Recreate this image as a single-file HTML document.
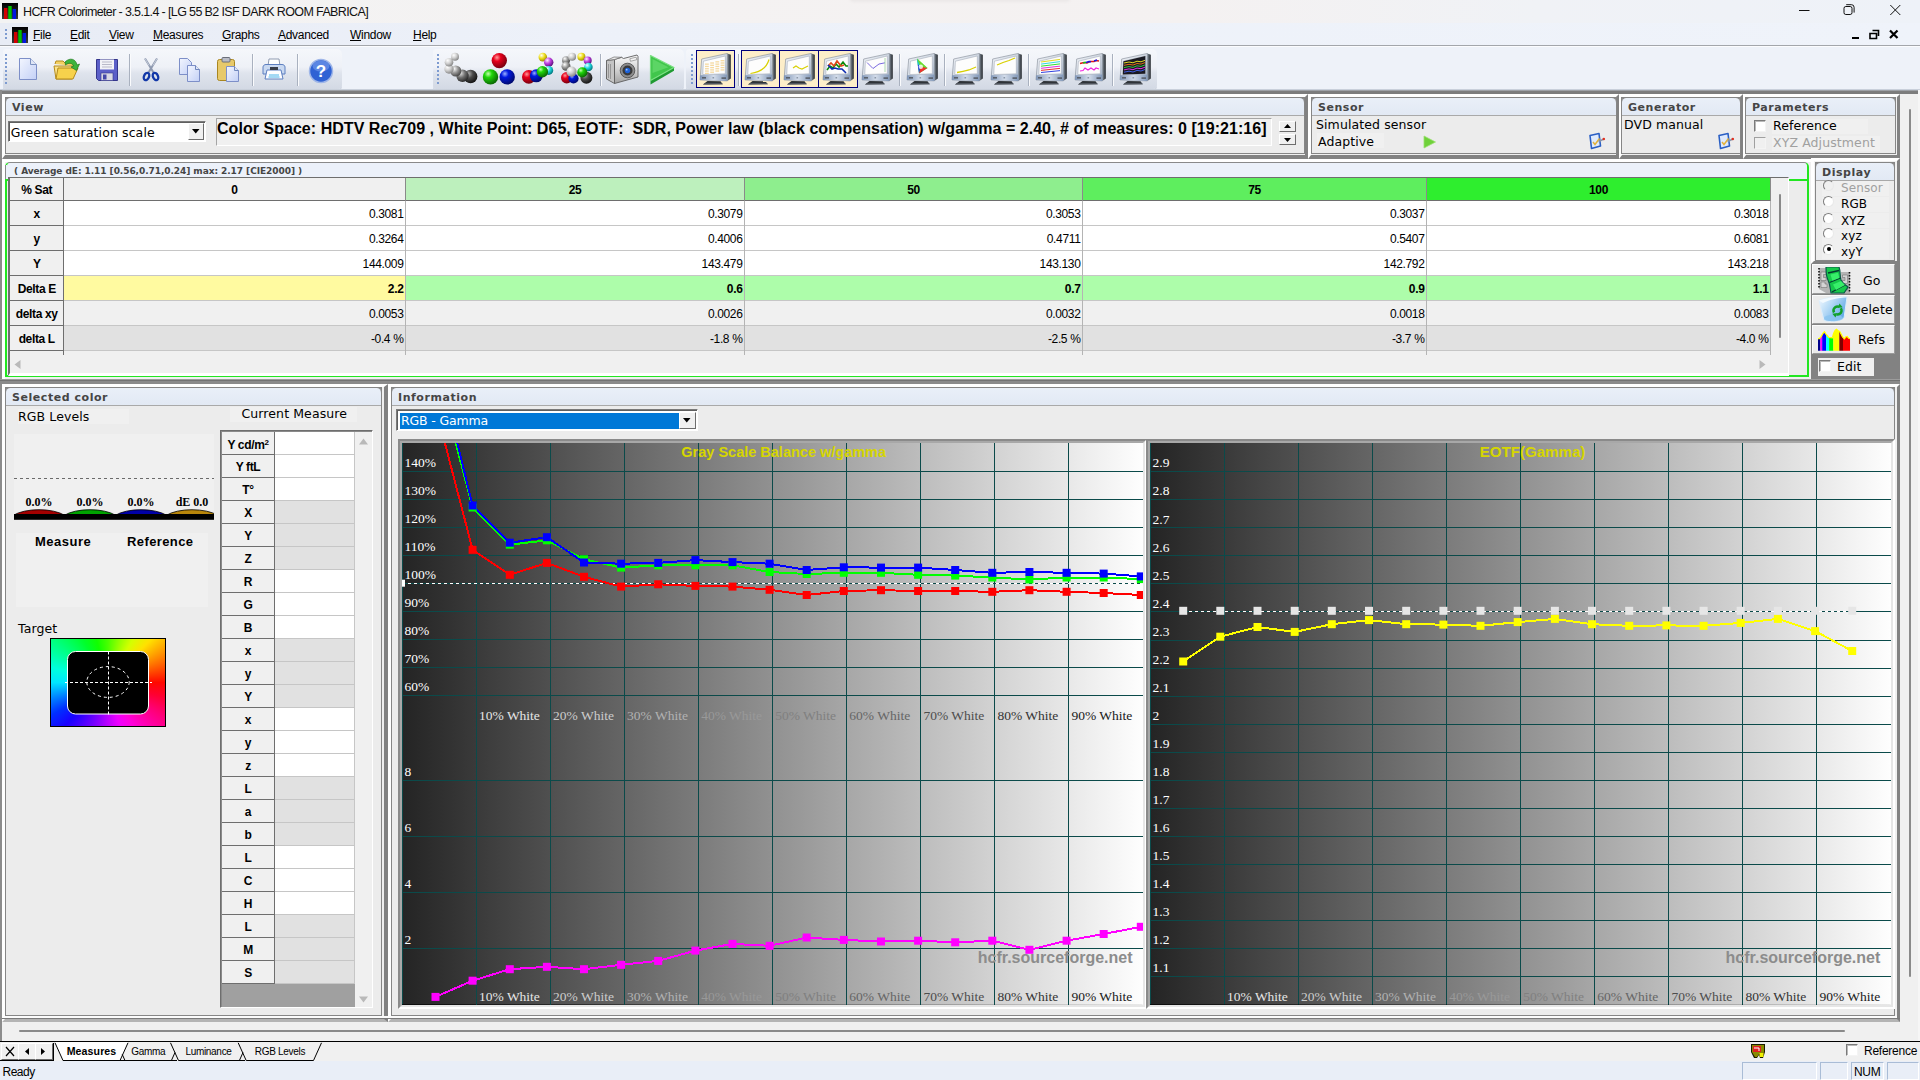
<!DOCTYPE html>
<html lang="en"><head><meta charset="utf-8"><title>HCFR Colorimeter - 3.5.1.4 - [LG 55 B2 ISF DARK ROOM FABRICA]</title>
<style>
*{box-sizing:border-box;margin:0;padding:0}
html,body{width:1920px;height:1080px;overflow:hidden;background:#f0f0f0}
body{position:relative;font-family:"Liberation Sans",sans-serif;font-size:12px;color:#000}
.a{position:absolute}
.t{position:absolute;white-space:pre;line-height:1}
.ui{font-family:"Liberation Sans",sans-serif;font-size:12px;letter-spacing:-0.35px}
.vd{font-family:"DejaVu Sans","Liberation Sans",sans-serif;font-size:12.5px;letter-spacing:0.1px}
.vb{font-family:"DejaVu Sans","Liberation Sans",sans-serif;font-weight:bold;font-size:11px;letter-spacing:.55px;color:#454545}
.sf{font-family:"Liberation Serif",serif}
/* dock wrappers: raised edge */
.wrap{position:absolute;border-style:solid;border-width:3px;border-color:#fff #828282 #828282 #fff;background:#f0f0f0}
.pnl{position:absolute;background:#ececec;border:1px solid #868686;overflow:hidden}
.pnl::before{content:"";position:absolute;left:0;top:0;right:0;height:5px;background:#8c8c8c}
.pnl .hd{position:absolute;left:0;top:0;right:0;height:18px;border-radius:4.5px 4.5px 0 0;background:linear-gradient(#e9eff8,#e2e9f4);border-bottom:1px solid #a9a9a9}
.pnl .hd span{position:absolute;left:6px;top:3px;white-space:pre;line-height:14px}
.cb{position:absolute;width:12px;height:12px;background:#fff;border:1px solid;border-color:#7a7a7a #f4f4f4 #f4f4f4 #7a7a7a;box-shadow:inset 1px 1px 0 #b9b9b9}
.rd{position:absolute;width:11px;height:11px;border-radius:50%;background:#fff;border:1px solid;border-color:#7c7c7c #e9e9e9 #e9e9e9 #7c7c7c}
.btn{position:absolute;background:#ececec;border:1px solid;border-color:#fbfbfb #9a9a9a #9a9a9a #fbfbfb}
</style></head><body>

<svg width="0" height="0" style="position:absolute"><defs>
<linearGradient id="gBez" x1="0" y1="0" x2="1" y2="1"><stop offset="0" stop-color="#f4f6fa"/><stop offset=".6" stop-color="#c9d2de"/><stop offset="1" stop-color="#9fb0c8"/></linearGradient>
<linearGradient id="gSide" x1="0" y1="0" x2="1" y2="0"><stop offset="0" stop-color="#7d8792"/><stop offset="1" stop-color="#23272c"/></linearGradient>
<linearGradient id="gLow" x1="0" y1="0" x2="1" y2="0"><stop offset="0" stop-color="#7f95b6"/><stop offset=".5" stop-color="#d3dcea"/><stop offset="1" stop-color="#8298b8"/></linearGradient>
<linearGradient id="gPage" x1="0" y1="0" x2="1" y2="1"><stop offset="0" stop-color="#f3f6ff"/><stop offset="1" stop-color="#c3d0f6"/></linearGradient>
<linearGradient id="gIco" x1="0" y1="0" x2="0" y2="1"><stop offset="0" stop-color="#000"/><stop offset="1" stop-color="#3a3a3a"/></linearGradient>
<radialGradient id="bR" cx=".35" cy=".3" r=".7"><stop offset="0" stop-color="#ff9a9a"/><stop offset=".35" stop-color="#e8001c"/><stop offset="1" stop-color="#7a0010"/></radialGradient>
<radialGradient id="bG" cx=".35" cy=".3" r=".7"><stop offset="0" stop-color="#c6ffb0"/><stop offset=".35" stop-color="#1fd60a"/><stop offset="1" stop-color="#0a6a04"/></radialGradient>
<radialGradient id="bB" cx=".35" cy=".3" r=".7"><stop offset="0" stop-color="#9ab0ff"/><stop offset=".35" stop-color="#0018e0"/><stop offset="1" stop-color="#000a70"/></radialGradient>
<radialGradient id="bW" cx=".35" cy=".3" r=".7"><stop offset="0" stop-color="#ffffff"/><stop offset=".5" stop-color="#d0d0d0"/><stop offset="1" stop-color="#8a8a8a"/></radialGradient>
<radialGradient id="bK" cx=".35" cy=".3" r=".7"><stop offset="0" stop-color="#b0b0b0"/><stop offset=".45" stop-color="#4a4a4a"/><stop offset="1" stop-color="#161616"/></radialGradient>
<radialGradient id="bD" cx=".35" cy=".3" r=".7"><stop offset="0" stop-color="#e0e0e0"/><stop offset=".5" stop-color="#707070"/><stop offset="1" stop-color="#2c2c2c"/></radialGradient>
<radialGradient id="bM" cx=".35" cy=".3" r=".7"><stop offset="0" stop-color="#ffffff"/><stop offset=".5" stop-color="#9a9a9a"/><stop offset="1" stop-color="#4a4a4a"/></radialGradient>
<radialGradient id="bY" cx=".35" cy=".3" r=".7"><stop offset="0" stop-color="#fffff0"/><stop offset=".5" stop-color="#f0e020"/><stop offset="1" stop-color="#a09000"/></radialGradient>
<radialGradient id="bC" cx=".35" cy=".3" r=".7"><stop offset="0" stop-color="#f0ffff"/><stop offset=".5" stop-color="#20d8e0"/><stop offset="1" stop-color="#007a80"/></radialGradient>
<radialGradient id="bP" cx=".35" cy=".3" r=".7"><stop offset="0" stop-color="#fff0ff"/><stop offset=".5" stop-color="#c040e0"/><stop offset="1" stop-color="#601080"/></radialGradient>
</defs></svg>
<div class="a" style="left:0;top:0;width:1920px;height:23px;background:linear-gradient(90deg,#f3f3f3 0,#f4f2f2 35%,#f4f1f1 62%,#f0f2f6 80%,#eef2f8 100%)"></div>
<svg class="a" style="left:2px;top:3px" width="16" height="16" viewBox="0 0 16 16"><rect width="16" height="16" fill="url(#gIco)"/><rect x="2" y="5" width="3.4" height="11" fill="#d40000"/><rect x="6.3" y="3" width="3.4" height="13" fill="#00c000"/><rect x="10.6" y="6" width="3.4" height="10" fill="#0018e0"/></svg>
<div class="t" style="left:23px;top:6px;font-size:12.5px;letter-spacing:-0.63px;color:#111">HCFR Colorimeter - 3.5.1.4 - [LG 55 B2 ISF DARK ROOM FABRICA]</div>
<svg class="a" style="left:1790px;top:0" width="130" height="23" viewBox="0 0 130 23" fill="none" stroke="#111" stroke-width="1"><path d="M9 10.5h10.5"/><rect x="54" y="6.5" width="8" height="8" rx="1.8"/><path d="M56.2 4.7h5.3a2.6 2.6 0 0 1 2.6 2.6v5.3"/><path d="M100.3 5l10 10M110.3 5l-10 10"/></svg>
<div class="a" style="left:0;top:23px;width:1920px;height:22px;background:linear-gradient(90deg,#e8ecf5 0,#edf1f9 30%,#eff3fa 100%)"></div>
<div class="a" style="left:850px;top:-7px;width:220px;height:8px;border-radius:5px;background:#ece9e9;box-shadow:0 0 3px 1px #ebe8e8"></div>
<div class="a" style="left:0;top:45px;width:1920px;height:1px;background:#a3a6ab"></div>
<div class="a" style="left:0;top:46px;width:1920px;height:1px;background:#fbfcfe"></div>
<div class="a" style="left:5px;top:29px;width:2px;height:11px;background:repeating-linear-gradient(#7d9bd0 0 2px,transparent 2px 4px)"></div>
<svg class="a" style="left:12px;top:27px" width="16" height="16" viewBox="0 0 16 16"><rect width="16" height="16" fill="url(#gIco)"/><rect x="2" y="5" width="3.4" height="11" fill="#d40000"/><rect x="6.3" y="3" width="3.4" height="13" fill="#00c000"/><rect x="10.6" y="6" width="3.4" height="10" fill="#0018e0"/></svg>
<div class="t" style="left:33px;top:28.5px;font-size:12px;letter-spacing:-0.3px"><u>F</u>ile</div>
<div class="t" style="left:70px;top:28.5px;font-size:12px;letter-spacing:-0.3px"><u>E</u>dit</div>
<div class="t" style="left:109px;top:28.5px;font-size:12px;letter-spacing:-0.3px"><u>V</u>iew</div>
<div class="t" style="left:153px;top:28.5px;font-size:12px;letter-spacing:-0.3px"><u>M</u>easures</div>
<div class="t" style="left:222px;top:28.5px;font-size:12px;letter-spacing:-0.3px"><u>G</u>raphs</div>
<div class="t" style="left:278px;top:28.5px;font-size:12px;letter-spacing:-0.3px"><u>A</u>dvanced</div>
<div class="t" style="left:350px;top:28.5px;font-size:12px;letter-spacing:-0.3px"><u>W</u>indow</div>
<div class="t" style="left:413px;top:28.5px;font-size:12px;letter-spacing:-0.3px"><u>H</u>elp</div>
<svg class="a" style="left:1848px;top:26px" width="56" height="16" viewBox="0 0 56 16"><rect x="4" y="11" width="7" height="2" fill="#000"/><path d="M24.5 4.5h6v5.5M22 7.5h6.5v5h-6.5z" fill="none" stroke="#000" stroke-width="1.6"/><path d="M42 4.5l7.5 7.5M49.5 4.5l-7.5 7.5" stroke="#000" stroke-width="2.2"/></svg>
<div class="a" style="left:0;top:47px;width:1920px;height:43px;background:#eef2f9"></div>
<div class="a" style="left:3px;top:49px;width:339px;height:40px;background:linear-gradient(#f5f7fb 0,#eef1f7 45%,#dfe4ed 60%,#d3d9e4 100%);border-radius:3px 5px 4px 3px;box-shadow:0 1px 0 #c3cad6"></div>
<div class="a" style="left:433px;top:49px;width:251px;height:40px;background:linear-gradient(#f5f7fb 0,#eef1f7 45%,#dfe4ed 60%,#d3d9e4 100%);border-radius:3px 5px 4px 3px;box-shadow:0 1px 0 #c3cad6"></div>
<div class="a" style="left:686px;top:49px;width:471px;height:40px;background:linear-gradient(#f5f7fb 0,#eef1f7 45%,#dfe4ed 60%,#d3d9e4 100%);border-radius:3px 5px 4px 3px;box-shadow:0 1px 0 #c3cad6"></div>
<div class="a" style="left:5px;top:54px;width:2px;height:30px;background:repeating-linear-gradient(#7d9bd0 0 2px,transparent 2px 4px)"></div>
<div class="a" style="left:437px;top:54px;width:2px;height:30px;background:repeating-linear-gradient(#7d9bd0 0 2px,transparent 2px 4px)"></div>
<div class="a" style="left:691px;top:54px;width:2px;height:30px;background:repeating-linear-gradient(#7d9bd0 0 2px,transparent 2px 4px)"></div>
<div class="a" style="left:129px;top:54px;width:1px;height:32px;background:#a9b1bf;box-shadow:1px 0 0 #fafbfd"></div>
<div class="a" style="left:252px;top:54px;width:1px;height:32px;background:#a9b1bf;box-shadow:1px 0 0 #fafbfd"></div>
<div class="a" style="left:297px;top:54px;width:1px;height:32px;background:#a9b1bf;box-shadow:1px 0 0 #fafbfd"></div>
<div class="a" style="left:600px;top:54px;width:1px;height:32px;background:#a9b1bf;box-shadow:1px 0 0 #fafbfd"></div>
<div class="a" style="left:738px;top:54px;width:1px;height:32px;background:#a9b1bf;box-shadow:1px 0 0 #fafbfd"></div>
<div class="a" style="left:899px;top:54px;width:1px;height:32px;background:#a9b1bf;box-shadow:1px 0 0 #fafbfd"></div>
<div class="a" style="left:944px;top:54px;width:1px;height:32px;background:#a9b1bf;box-shadow:1px 0 0 #fafbfd"></div>
<div class="a" style="left:1028px;top:54px;width:1px;height:32px;background:#a9b1bf;box-shadow:1px 0 0 #fafbfd"></div>
<div class="a" style="left:1112px;top:54px;width:1px;height:32px;background:#a9b1bf;box-shadow:1px 0 0 #fafbfd"></div>
<svg class="a" style="left:18px;top:57px" width="20" height="24" viewBox="0 0 20 24"><path d="M1.5 1.5h11l6 6v15h-17z" fill="url(#gPage)" stroke="#7d8fc8"/><path d="M12.5 1.5v6h6" fill="#dfe6f5" stroke="#7d93c2"/></svg>
<svg class="a" style="left:53px;top:56px" width="28" height="26" viewBox="0 0 28 26"><path d="M2 8l1-3h7l2 2h9v3" fill="#f3d063" stroke="#b48a1c"/><path d="M1 10h20l-2 13H3z" fill="#fbe38b" stroke="#b48a1c"/><path d="M5 12h20l-5 11H3z" fill="#f7d24c" stroke="#b48a1c"/><path d="M12 6c5-5 11-3 12 3l2.5-1-3 6.5-5.5-3.5 2.6-.9c-1-3-5-4-8-1z" fill="#3cb43c" stroke="#1c7a1c" stroke-width=".7"/></svg>
<svg class="a" style="left:95px;top:58px" width="24" height="24" viewBox="0 0 24 24"><path d="M1.5 1.5h21v21h-19l-2-2z" fill="#5b5fc8" stroke="#34368c"/><rect x="5" y="1.5" width="14" height="10" fill="#f2f2f7"/><path d="M7 4h10M7 6.5h10M7 9h10" stroke="#b9b9c8"/><rect x="6" y="15" width="12" height="7.5" fill="#d8d8e4" stroke="#34368c" stroke-width=".6"/><rect x="8" y="16.5" width="3.5" height="5" fill="#4448a8"/></svg>
<svg class="a" style="left:140px;top:57px" width="22" height="26" viewBox="0 0 22 26" fill="none"><path d="M5 1.500l8.500 14M17 1.500L8.500 15.500" stroke="#8e99b0" stroke-width="2"/><path d="M5 1.500l4 7M17 1.500l-4 7" stroke="#c5ccd9" stroke-width="1"/><ellipse cx="6.500" cy="19.500" rx="2.500" ry="3.800" transform="rotate(25 6.500 19.500)" stroke="#1238a8" stroke-width="2.300"/><ellipse cx="15.500" cy="19.500" rx="2.500" ry="3.800" transform="rotate(-25 15.500 19.500)" stroke="#1238a8" stroke-width="2.300"/></svg>
<svg class="a" style="left:178px;top:57px" width="24" height="26" viewBox="0 0 24 26"><path d="M1.5 1.5h8l4 4v12h-12z" fill="url(#gPage)" stroke="#7d8fc8"/><path d="M9.500 8.500h8l4 4v12h-12z" fill="url(#gPage)" stroke="#7d8fc8"/><path d="M17.5 8.500v4h4" fill="#dfe6f5" stroke="#6f86bc"/></svg>
<svg class="a" style="left:216px;top:56px" width="24" height="27" viewBox="0 0 24 27"><rect x="1.500" y="3.500" width="17" height="21" rx="2" fill="#e7c96a" stroke="#a98620"/><rect x="6" y="1.5" width="8" height="4.5" rx="1" fill="#b9bcc6" stroke="#6a6e7a"/><path d="M10.5 10.500h8l4 4v11h-12z" fill="url(#gPage)" stroke="#7d8fc8"/><path d="M18.5 10.500v4h4" fill="#dfe6f5" stroke="#6f86bc"/></svg>
<svg class="a" style="left:261px;top:58px" width="26" height="24" viewBox="0 0 26 24"><path d="M8 1h10l1 7H7z" fill="#fff" stroke="#8f9bb0"/><path d="M2 9c0-1.500 1.500-2.500 3-2.500h16c1.500 0 3 1 3 2.500v7H2z" fill="#c9d9f1" stroke="#5d7fc0"/><path d="M6 12h14l2 9H4z" fill="#fdfdff" stroke="#5d7fc0"/><rect x="9" y="9" width="8" height="3" fill="#3a3f4a"/><path d="M8 17l10 0M7.500 19h11" stroke="#4ab4e8"/></svg>
<svg class="a" style="left:308px;top:58px" width="26" height="26" viewBox="0 0 26 26"><circle cx="13" cy="13" r="11.500" fill="#2f62d4" stroke="#9fb6e8" stroke-width="1.500"/><ellipse cx="13" cy="8" rx="8.500" ry="5.500" fill="#7fa4ee" opacity=".55"/><text x="13" y="19" font-family="Liberation Sans" font-weight="bold" font-size="17" text-anchor="middle" fill="#fff">?</text></svg>
<svg class="a" style="left:432px;top:46px" width="170" height="44" viewBox="432 46 170 44"><circle cx="470.6" cy="76.5" r="6.8" fill="url(#bK)"/><circle cx="462.5" cy="75.8" r="6.2" fill="url(#bD)"/><circle cx="455.7" cy="71" r="5.6" fill="url(#bM)"/><circle cx="449" cy="69" r="4.7" fill="url(#bW)"/><circle cx="449" cy="62.2" r="4.3" fill="url(#bW)"/><circle cx="455" cy="56.8" r="4" fill="url(#bW)"/><circle cx="499.3" cy="60.6" r="7.7" fill="url(#bR)"/><circle cx="490.5" cy="76.9" r="7.7" fill="url(#bG)"/><circle cx="507.2" cy="76.9" r="7.7" fill="url(#bB)"/><circle cx="542.8" cy="57.1" r="4.3" fill="url(#bY)"/><circle cx="548.7" cy="62.2" r="4.7" fill="url(#bP)"/><circle cx="548.7" cy="70.4" r="4.5" fill="url(#bC)"/><circle cx="528.8" cy="76.9" r="6.8" fill="url(#bR)"/><circle cx="536.3" cy="75.8" r="6.5" fill="url(#bB)"/><circle cx="542.4" cy="71.7" r="5.7" fill="url(#bG)"/><circle cx="566" cy="60.2" r="4" fill="url(#bM)"/><circle cx="572.1" cy="56.8" r="4" fill="url(#bW)"/><circle cx="581.4" cy="56.8" r="4" fill="url(#bY)"/><circle cx="587.7" cy="60.6" r="4" fill="url(#bP)"/><circle cx="588.4" cy="67" r="4.3" fill="url(#bC)"/><circle cx="586.4" cy="77.8" r="6" fill="url(#bK)"/><circle cx="566.7" cy="77.8" r="5.7" fill="url(#bR)"/><circle cx="573.5" cy="78.5" r="5.1" fill="url(#bB)"/><circle cx="582.3" cy="72.4" r="5.1" fill="url(#bG)"/><circle cx="566" cy="66.3" r="4.5" fill="url(#bM)"/><circle cx="571.5" cy="71.7" r="5.1" fill="url(#bW)"/></svg>
<svg class="a" style="left:605px;top:53px" width="36" height="33" viewBox="0 0 36 33"><defs><linearGradient id="gCam" x1="0" y1="0" x2="0" y2="1"><stop offset="0" stop-color="#fafafa"/><stop offset=".5" stop-color="#d4d4d4"/><stop offset="1" stop-color="#a2a2a2"/></linearGradient></defs><path d="M9.500 6.500l7-2.200 2 1.200 13.500-3.500 1 1.500v20.500l-23.500 6.500z" fill="url(#gCam)" stroke="#5e5e5e" stroke-width=".9"/><path d="M1.500 7.500l8 -1v24l-8-4.500z" fill="#c4c4c4" stroke="#5e5e5e" stroke-width=".9"/><path d="M3.500 11v14M5.500 11v15" stroke="#8a8a8a" stroke-width=".8"/><path d="M1.500 7.500l7.500-3.500 7.500.3-7 2.200z" fill="#ececec" stroke="#6a6a6a" stroke-width=".7"/><rect x="25" y="5" width="6.500" height="2.600" fill="#f4f4f4" stroke="#6a6a6a" stroke-width=".5" transform="rotate(-14 28 6)"/><circle cx="22.500" cy="17.500" r="7.300" fill="#8d8d8d" stroke="#444" stroke-width=".8"/><circle cx="22.500" cy="17.500" r="5" fill="#3a3a3a"/><circle cx="22.500" cy="17.500" r="2.700" fill="#1d62d8"/><circle cx="21.700" cy="16.700" r=".9" fill="#9cc4ff"/></svg>
<svg class="a" style="left:649px;top:54px" width="27" height="32" viewBox="0 0 27 32"><path d="M1.500 26l23.500-12.500v3.200L1.500 30.500z" fill="#1f9a32"/><path d="M1.500 1.500l23.500 12L1.500 26.500z" fill="#41c64c" stroke="#7be082" stroke-width="1.200" stroke-linejoin="round"/><path d="M3.500 5l16 8.300L3.500 19z" fill="#66d96e" opacity=".75"/></svg>
<div class="a" style="left:696px;top:50px;width:39px;height:38px;background:#fdeec9;border:1px solid #00007c"></div>
<div class="a" style="left:741px;top:50px;width:39px;height:38px;background:#fdeec9;border:1px solid #00007c"></div>
<div class="a" style="left:779px;top:50px;width:40px;height:38px;background:#fdeec9;border:1px solid #00007c"></div>
<div class="a" style="left:818px;top:50px;width:40px;height:38px;background:#fdeec9;border:1px solid #00007c"></div>
<svg class="a" style="left:699px;top:53px" width="33" height="33" viewBox="0 0 33 33"><polygon points="2.7,6 28.4,0.4 28.4,27.9 1,26.9" fill="url(#gBez)" stroke="#7f8894" stroke-width=".6"/><polygon points="28.4,0.4 31.8,1.8 31.8,25.4 28.4,27.9" fill="url(#gSide)"/><polygon points="1,22.2 28.4,21.6 28.4,27.9 1,26.9" fill="url(#gLow)"/><polygon points="4.4,8.2 26.3,3 26.3,20.8 3.8,21.5" fill="#fdfdfd" stroke="#9aa3b0" stroke-width=".5"/><rect x="3" y="24" width="4" height="1.6" fill="#59606b"/><rect x="22.5" y="24.3" width="4.5" height="1.6" fill="#59606b"/><rect x="13.5" y="24.2" width="1.6" height="1.2" fill="#7b8798"/><polygon points="8.5,28 21.5,28.3 23.8,31.2 4,31.4" fill="#2f3338"/><polygon points="6,30.3 23,30.2 23.8,31.2 4,31.4" fill="#5b6068"/><rect x="6.0" y="10.5" width="3.800" height="1.300" fill="#f5d9a0"/><rect x="11.2" y="9.35" width="3.800" height="1.300" fill="#f5d9a0"/><rect x="16.4" y="8.2" width="3.800" height="1.300" fill="#f5d9a0"/><rect x="21.6" y="7.050000000000001" width="3.800" height="1.300" fill="#f5d9a0"/><rect x="6.0" y="12.8" width="3.800" height="1.300" fill="#f5d9a0"/><rect x="11.2" y="11.65" width="3.800" height="1.300" fill="#f5d9a0"/><rect x="16.4" y="10.5" width="3.800" height="1.300" fill="#f5d9a0"/><rect x="21.6" y="9.350000000000001" width="3.800" height="1.300" fill="#f5d9a0"/><rect x="6.0" y="15.1" width="3.800" height="1.300" fill="#f5d9a0"/><rect x="11.2" y="13.95" width="3.800" height="1.300" fill="#f5d9a0"/><rect x="16.4" y="12.8" width="3.800" height="1.300" fill="#f5d9a0"/><rect x="21.6" y="11.65" width="3.800" height="1.300" fill="#f5d9a0"/><rect x="6.0" y="17.4" width="3.800" height="1.300" fill="#f5d9a0"/><rect x="11.2" y="16.25" width="3.800" height="1.300" fill="#f5d9a0"/><rect x="16.4" y="15.099999999999998" width="3.800" height="1.300" fill="#f5d9a0"/><rect x="21.6" y="13.95" width="3.800" height="1.300" fill="#f5d9a0"/><rect x="6.0" y="19.7" width="3.800" height="1.300" fill="#f5d9a0"/><rect x="11.2" y="18.55" width="3.800" height="1.300" fill="#f5d9a0"/><rect x="16.4" y="17.4" width="3.800" height="1.300" fill="#f5d9a0"/><rect x="21.6" y="16.25" width="3.800" height="1.300" fill="#f5d9a0"/></svg>
<svg class="a" style="left:744px;top:53px" width="33" height="33" viewBox="0 0 33 33"><polygon points="2.7,6 28.4,0.4 28.4,27.9 1,26.9" fill="url(#gBez)" stroke="#7f8894" stroke-width=".6"/><polygon points="28.4,0.4 31.8,1.8 31.8,25.4 28.4,27.9" fill="url(#gSide)"/><polygon points="1,22.2 28.4,21.6 28.4,27.9 1,26.9" fill="url(#gLow)"/><polygon points="4.4,8.2 26.3,3 26.3,20.8 3.8,21.5" fill="#fdfdfd" stroke="#9aa3b0" stroke-width=".5"/><rect x="3" y="24" width="4" height="1.6" fill="#59606b"/><rect x="22.5" y="24.3" width="4.5" height="1.6" fill="#59606b"/><rect x="13.5" y="24.2" width="1.6" height="1.2" fill="#7b8798"/><polygon points="8.5,28 21.5,28.3 23.8,31.2 4,31.4" fill="#2f3338"/><polygon points="6,30.3 23,30.2 23.8,31.2 4,31.4" fill="#5b6068"/><path d="M6.500 20.500c8-1 16-5 18.500-14" fill="none" stroke="#d8d000" stroke-width="1.200"/></svg>
<svg class="a" style="left:783px;top:53px" width="33" height="33" viewBox="0 0 33 33"><polygon points="2.7,6 28.4,0.4 28.4,27.9 1,26.9" fill="url(#gBez)" stroke="#7f8894" stroke-width=".6"/><polygon points="28.4,0.4 31.8,1.8 31.8,25.4 28.4,27.9" fill="url(#gSide)"/><polygon points="1,22.2 28.4,21.6 28.4,27.9 1,26.9" fill="url(#gLow)"/><polygon points="4.4,8.2 26.3,3 26.3,20.8 3.8,21.5" fill="#fdfdfd" stroke="#9aa3b0" stroke-width=".5"/><rect x="3" y="24" width="4" height="1.6" fill="#59606b"/><rect x="22.5" y="24.3" width="4.5" height="1.6" fill="#59606b"/><rect x="13.5" y="24.2" width="1.6" height="1.2" fill="#7b8798"/><polygon points="8.5,28 21.5,28.3 23.8,31.2 4,31.4" fill="#2f3338"/><polygon points="6,30.3 23,30.2 23.8,31.2 4,31.4" fill="#5b6068"/><path d="M10 15l3-2 3 2 3 1 3-1.500 3-1.500" fill="none" stroke="#d8d000" stroke-width="1.200"/></svg>
<svg class="a" style="left:822px;top:53px" width="33" height="33" viewBox="0 0 33 33"><polygon points="2.7,6 28.4,0.4 28.4,27.9 1,26.9" fill="url(#gBez)" stroke="#7f8894" stroke-width=".6"/><polygon points="28.4,0.4 31.8,1.8 31.8,25.4 28.4,27.9" fill="url(#gSide)"/><polygon points="1,22.2 28.4,21.6 28.4,27.9 1,26.9" fill="url(#gLow)"/><polygon points="4.4,8.2 26.3,3 26.3,20.8 3.8,21.5" fill="#fdfdfd" stroke="#9aa3b0" stroke-width=".5"/><rect x="3" y="24" width="4" height="1.6" fill="#59606b"/><rect x="22.5" y="24.3" width="4.5" height="1.6" fill="#59606b"/><rect x="13.5" y="24.2" width="1.6" height="1.2" fill="#7b8798"/><polygon points="8.5,28 21.5,28.3 23.8,31.2 4,31.4" fill="#2f3338"/><polygon points="6,30.3 23,30.2 23.8,31.2 4,31.4" fill="#5b6068"/><path d="M5 17l3-4 3 2 3-4 3 3 4-5 3 4h2" fill="none" stroke="#0a8a0a" stroke-width="1.600"/><path d="M6 13l3-3 3 3 3-5 4 5 3-1" fill="none" stroke="#e04818" stroke-width="1.600"/><path d="M6 12l4 4 3-1 3 1 4 0 4 4" fill="none" stroke="#0a2ab0" stroke-width="1.600"/></svg>
<svg class="a" style="left:861px;top:53px" width="33" height="33" viewBox="0 0 33 33"><polygon points="2.7,6 28.4,0.4 28.4,27.9 1,26.9" fill="url(#gBez)" stroke="#7f8894" stroke-width=".6"/><polygon points="28.4,0.4 31.8,1.8 31.8,25.4 28.4,27.9" fill="url(#gSide)"/><polygon points="1,22.2 28.4,21.6 28.4,27.9 1,26.9" fill="url(#gLow)"/><polygon points="4.4,8.2 26.3,3 26.3,20.8 3.8,21.5" fill="#fdfdfd" stroke="#9aa3b0" stroke-width=".5"/><rect x="3" y="24" width="4" height="1.6" fill="#59606b"/><rect x="22.5" y="24.3" width="4.5" height="1.6" fill="#59606b"/><rect x="13.5" y="24.2" width="1.6" height="1.2" fill="#7b8798"/><polygon points="8.5,28 21.5,28.3 23.8,31.2 4,31.4" fill="#2f3338"/><polygon points="6,30.3 23,30.2 23.8,31.2 4,31.4" fill="#5b6068"/><path d="M6 9.500l6 6 6-4.500 6-1.200" fill="none" stroke="#7a6ae0" stroke-width="1"/><path d="M24 5v14" stroke="#9ad09a" stroke-width=".8"/></svg>
<svg class="a" style="left:906px;top:53px" width="33" height="33" viewBox="0 0 33 33"><polygon points="2.7,6 28.4,0.4 28.4,27.9 1,26.9" fill="url(#gBez)" stroke="#7f8894" stroke-width=".6"/><polygon points="28.4,0.4 31.8,1.8 31.8,25.4 28.4,27.9" fill="url(#gSide)"/><polygon points="1,22.2 28.4,21.6 28.4,27.9 1,26.9" fill="url(#gLow)"/><polygon points="4.4,8.2 26.3,3 26.3,20.8 3.8,21.5" fill="#fdfdfd" stroke="#9aa3b0" stroke-width=".5"/><rect x="3" y="24" width="4" height="1.6" fill="#59606b"/><rect x="22.5" y="24.3" width="4.5" height="1.6" fill="#59606b"/><rect x="13.5" y="24.2" width="1.6" height="1.2" fill="#7b8798"/><polygon points="8.5,28 21.5,28.3 23.8,31.2 4,31.4" fill="#2f3338"/><polygon points="6,30.3 23,30.2 23.8,31.2 4,31.4" fill="#5b6068"/><polygon points="11,5.500 21.500,15 13,20.500" fill="#2fd840"/><polygon points="21.500,15 13,20.500 14.500,13.500" fill="#f03030"/><polygon points="13,20.500 11.600,11 14.500,13.500" fill="#2838e0"/><polygon points="11,5.500 11.600,11 14.500,13.500" fill="#20c0d0"/><polygon points="11,5.500 21.500,15 14.500,13.500" fill="#a0e020" opacity=".55"/><circle cx="14.800" cy="13.800" r="2.200" fill="#fff" opacity=".8"/></svg>
<svg class="a" style="left:951px;top:53px" width="33" height="33" viewBox="0 0 33 33"><polygon points="2.7,6 28.4,0.4 28.4,27.9 1,26.9" fill="url(#gBez)" stroke="#7f8894" stroke-width=".6"/><polygon points="28.4,0.4 31.8,1.8 31.8,25.4 28.4,27.9" fill="url(#gSide)"/><polygon points="1,22.2 28.4,21.6 28.4,27.9 1,26.9" fill="url(#gLow)"/><polygon points="4.4,8.2 26.3,3 26.3,20.8 3.8,21.5" fill="#fdfdfd" stroke="#9aa3b0" stroke-width=".5"/><rect x="3" y="24" width="4" height="1.6" fill="#59606b"/><rect x="22.5" y="24.3" width="4.5" height="1.6" fill="#59606b"/><rect x="13.5" y="24.2" width="1.6" height="1.2" fill="#7b8798"/><polygon points="8.5,28 21.5,28.3 23.8,31.2 4,31.4" fill="#2f3338"/><polygon points="6,30.3 23,30.2 23.8,31.2 4,31.4" fill="#5b6068"/><path d="M6 19.500l6-1.200 6-1.300 7-3" fill="none" stroke="#d8d000" stroke-width="1.300"/></svg>
<svg class="a" style="left:990px;top:53px" width="33" height="33" viewBox="0 0 33 33"><polygon points="2.7,6 28.4,0.4 28.4,27.9 1,26.9" fill="url(#gBez)" stroke="#7f8894" stroke-width=".6"/><polygon points="28.4,0.4 31.8,1.8 31.8,25.4 28.4,27.9" fill="url(#gSide)"/><polygon points="1,22.2 28.4,21.6 28.4,27.9 1,26.9" fill="url(#gLow)"/><polygon points="4.4,8.2 26.3,3 26.3,20.8 3.8,21.5" fill="#fdfdfd" stroke="#9aa3b0" stroke-width=".5"/><rect x="3" y="24" width="4" height="1.6" fill="#59606b"/><rect x="22.5" y="24.3" width="4.5" height="1.6" fill="#59606b"/><rect x="13.5" y="24.2" width="1.6" height="1.2" fill="#7b8798"/><polygon points="8.5,28 21.5,28.3 23.8,31.2 4,31.4" fill="#2f3338"/><polygon points="6,30.3 23,30.2 23.8,31.2 4,31.4" fill="#5b6068"/><path d="M7 12l6-2.500 6-2 6-2.500" fill="none" stroke="#d8d000" stroke-width="1.300"/></svg>
<svg class="a" style="left:1035px;top:53px" width="33" height="33" viewBox="0 0 33 33"><polygon points="2.7,6 28.4,0.4 28.4,27.9 1,26.9" fill="url(#gBez)" stroke="#7f8894" stroke-width=".6"/><polygon points="28.4,0.4 31.8,1.8 31.8,25.4 28.4,27.9" fill="url(#gSide)"/><polygon points="1,22.2 28.4,21.6 28.4,27.9 1,26.9" fill="url(#gLow)"/><polygon points="4.4,8.2 26.3,3 26.3,20.8 3.8,21.5" fill="#fdfdfd" stroke="#9aa3b0" stroke-width=".5"/><rect x="3" y="24" width="4" height="1.6" fill="#59606b"/><rect x="22.5" y="24.3" width="4.5" height="1.6" fill="#59606b"/><rect x="13.5" y="24.2" width="1.6" height="1.2" fill="#7b8798"/><polygon points="8.5,28 21.5,28.3 23.8,31.2 4,31.4" fill="#2f3338"/><polygon points="6,30.3 23,30.2 23.8,31.2 4,31.4" fill="#5b6068"/><path d="M6 9.0l19 -2.6" stroke="#e0d820" stroke-width="1"/><path d="M6 11.1l19 -2.45" stroke="#30d8e0" stroke-width="1"/><path d="M6 13.2l19 -2.3000000000000003" stroke="#30e030" stroke-width="1"/><path d="M6 15.3l19 -2.1500000000000004" stroke="#e030e0" stroke-width="1"/><path d="M6 17.4l19 -2.0" stroke="#e83030" stroke-width="1"/><path d="M6 19.5l19 -1.85" stroke="#3040e0" stroke-width="1"/></svg>
<svg class="a" style="left:1074px;top:53px" width="33" height="33" viewBox="0 0 33 33"><polygon points="2.7,6 28.4,0.4 28.4,27.9 1,26.9" fill="url(#gBez)" stroke="#7f8894" stroke-width=".6"/><polygon points="28.4,0.4 31.8,1.8 31.8,25.4 28.4,27.9" fill="url(#gSide)"/><polygon points="1,22.2 28.4,21.6 28.4,27.9 1,26.9" fill="url(#gLow)"/><polygon points="4.4,8.2 26.3,3 26.3,20.8 3.8,21.5" fill="#fdfdfd" stroke="#9aa3b0" stroke-width=".5"/><rect x="3" y="24" width="4" height="1.6" fill="#59606b"/><rect x="22.5" y="24.3" width="4.5" height="1.6" fill="#59606b"/><rect x="13.5" y="24.2" width="1.6" height="1.2" fill="#7b8798"/><polygon points="8.5,28 21.5,28.3 23.8,31.2 4,31.4" fill="#2f3338"/><polygon points="6,30.3 23,30.2 23.8,31.2 4,31.4" fill="#5b6068"/><path d="M6 10.500l4-1 3 .5 3-1.500 4 0 2-1 3 .5" fill="none" stroke="#e01818" stroke-width="1.400"/><path d="M12 9.500l3-1 2 .3M20 8l3-1" fill="none" stroke="#1818e0" stroke-width="1.400"/><path d="M9 10l3-.8" stroke="#18c018" stroke-width="1.400"/><path d="M6 18l3-.5 2-2.500 3 2 3-2 3 2 2-2 3 1" fill="none" stroke="#f020e0" stroke-width="1.200"/></svg>
<svg class="a" style="left:1119px;top:53px" width="33" height="33" viewBox="0 0 33 33"><polygon points="2.7,6 28.4,0.4 28.4,27.9 1,26.9" fill="url(#gBez)" stroke="#7f8894" stroke-width=".6"/><polygon points="28.4,0.4 31.8,1.8 31.8,25.4 28.4,27.9" fill="url(#gSide)"/><polygon points="1,22.2 28.4,21.6 28.4,27.9 1,26.9" fill="url(#gLow)"/><polygon points="4.4,8.2 26.3,3 26.3,20.8 3.8,21.5" fill="#fdfdfd" stroke="#9aa3b0" stroke-width=".5"/><rect x="3" y="24" width="4" height="1.6" fill="#59606b"/><rect x="22.5" y="24.3" width="4.5" height="1.6" fill="#59606b"/><rect x="13.5" y="24.2" width="1.6" height="1.2" fill="#7b8798"/><polygon points="8.5,28 21.5,28.3 23.8,31.2 4,31.4" fill="#2f3338"/><polygon points="6,30.3 23,30.2 23.8,31.2 4,31.4" fill="#5b6068"/><polygon points="4.400,8.200 26.300,3 26.300,20.800 3.800,21.500" fill="#1a1a22"/><path d="M5 10.0l5 -1 4 .8 4 -1.600 4 .6 4 -1.500" fill="none" stroke="#e0d820" stroke-width="1"/><path d="M5 12.3l5 -1 4 .8 4 -1.600 4 .6 4 -1.500" fill="none" stroke="#e07018" stroke-width="1"/><path d="M5 14.6l5 -1 4 .8 4 -1.600 4 .6 4 -1.500" fill="none" stroke="#30c040" stroke-width="1"/><path d="M5 16.9l5 -1 4 .8 4 -1.600 4 .6 4 -1.500" fill="none" stroke="#e030e0" stroke-width="1"/><path d="M5 19.2l5 -1 4 .8 4 -1.600 4 .6 4 -1.500" fill="none" stroke="#4060e0" stroke-width="1"/></svg>
<div class="a" style="left:0;top:89.5px;width:1919px;height:4px;background:linear-gradient(#a9adb3 0,#8e9094 30%,#7c7c7c 38%,#7c7c7c 100%)"></div>
<div class="a" style="left:0;top:88.5px;width:1920px;height:1px;background:#c9d0db"></div>
<div class="a" style="left:0;top:90px;width:2px;height:952px;background:#8c8c8c"></div>
<div class="wrap" style="left:2px;top:94px;width:1306px;height:65px;border-bottom-width:4px"></div>
<div class="wrap" style="left:1308px;top:94px;width:311px;height:65px;border-bottom-width:4px"></div>
<div class="wrap" style="left:1619px;top:94px;width:124px;height:65px;border-bottom-width:4px"></div>
<div class="wrap" style="left:1743px;top:94px;width:157px;height:65px;border-bottom-width:4px"></div>
<div class="pnl" style="left:5px;top:97px;width:1300px;height:57px;"><div class="hd"><span class="vb">View</span></div><div class="a" style="left:2px;top:23px;width:198px;height:21px;border:1px solid;border-color:#7a7a7a #fff #fff #7a7a7a;background:#fff;box-shadow:inset 1px 1px 0 #5f5f5f"></div><div class="t vd" style="left:4.8px;top:28.5px">Green saturation scale</div><div class="btn" style="left:182px;top:25px;width:16px;height:17px;background:#f0f0f0;border-color:#fff #6d6d6d #6d6d6d #fff"></div><svg class="a" style="left:186px;top:31px" width="8" height="5"><path d="M0 0h7.500L3.750 4.500z" fill="#000"/></svg><div class="a" style="left:210px;top:20px;width:1056px;height:28px;border:1px solid;border-color:#a5a5a5 #fff #fff #a5a5a5;background:#f0f0f0"></div><div class="t" style="left:211px;top:22.7px;font-weight:bold;font-size:16px;letter-spacing:0.04px">Color Space: HDTV Rec709 , White Point: D65, EOTF:  SDR, Power law (black compensation) w/gamma = 2.40, # of measures: 0 [19:21:16]</div><div class="btn" style="left:1273px;top:23px;width:17px;height:11px;background:#f0f0f0;border-color:#fff #6d6d6d #6d6d6d #fff"></div><div class="btn" style="left:1273px;top:36px;width:17px;height:11px;background:#f0f0f0;border-color:#fff #6d6d6d #6d6d6d #fff"></div><svg class="a" style="left:1278px;top:26px" width="7" height="4"><path d="M0 4h7L3.500 0z" fill="#000"/></svg><svg class="a" style="left:1278px;top:40px" width="7" height="4"><path d="M0 0h7L3.500 4z" fill="#000"/></svg></div>
<div class="pnl" style="left:1311px;top:97px;width:306px;height:57px;"><div class="hd"><span class="vb">Sensor</span></div><div class="t vd" style="left:4px;top:21px">Simulated sensor</div><div class="a" style="left:5px;top:35px;width:67px;height:15px;background:#f0f0f0"></div><div class="t vd" style="left:6px;top:37.500px">Adaptive</div><svg class="a" style="left:111px;top:37px" width="14" height="14" viewBox="0 0 14 14"><path d="M1 1l11.500 6L1 13z" fill="#6fd13a" stroke="#9be070" stroke-width=".8"/></svg><svg class="a" style="left:276px;top:34px" width="18" height="18" viewBox="0 0 18 18"><path d="M2 3.500l9-2 1.500 12.500-9 2.500z" fill="#dfeafc" stroke="#2a5fc4" stroke-width="1.600" stroke-linejoin="round"/><path d="M5 10l2 2.500 4.500-6" fill="none" stroke="#e3b23a" stroke-width="1.500"/><path d="M10.500 9.500l5-2.200" stroke="#8a94a8" stroke-width="1.600"/><circle cx="15.800" cy="7" r="1.300" fill="#e03020"/></svg></div>
<div class="pnl" style="left:1621px;top:97px;width:120px;height:57px;"><div class="hd"><span class="vb">Generator</span></div><div class="t vd" style="left:2px;top:21px">DVD manual</div><svg class="a" style="left:95px;top:34px" width="18" height="18" viewBox="0 0 18 18"><path d="M2 3.500l9-2 1.500 12.500-9 2.500z" fill="#dfeafc" stroke="#2a5fc4" stroke-width="1.600" stroke-linejoin="round"/><path d="M5 10l2 2.500 4.500-6" fill="none" stroke="#e3b23a" stroke-width="1.500"/><path d="M10.500 9.500l5-2.200" stroke="#8a94a8" stroke-width="1.600"/><circle cx="15.800" cy="7" r="1.300" fill="#e03020"/></svg></div>
<div class="pnl" style="left:1745px;top:97px;width:151px;height:57px;"><div class="hd"><span class="vb">Parameters</span></div><div class="cb" style="left:8px;top:22px"></div><div class="a" style="left:26px;top:21px;width:96px;height:15px;background:#f0f0f0"></div><div class="t vd" style="left:27px;top:21.500px">Reference</div><div class="cb" style="left:8px;top:39px;background:#f0f0f0;border-color:#a0a0a0 #f4f4f4 #f4f4f4 #a0a0a0;box-shadow:none"></div><div class="a" style="left:26px;top:38px;width:108px;height:15px;background:#f0f0f0"></div><div class="t vd" style="left:27px;top:39px;color:#a0a0a0">XYZ Adjustment</div></div>
<div class="a" style="left:1900px;top:94px;width:18px;height:927px;background:#f0f0f0"></div>
<div class="a" style="left:1909px;top:109px;width:2px;height:868px;background:#8a8a8a;border-radius:1px"></div>
<div class="a" style="left:1918px;top:90px;width:2px;height:952px;background:#f6f6f6"></div>
<div class="wrap" style="left:2px;top:159px;width:1809.5px;height:225px;border-right-width:1.5px;border-bottom-width:4.5px"></div>
<div class="a" style="left:1811px;top:158px;width:89px;height:226px;background:#828282"></div>
<div class="a" style="left:5px;top:162px;width:1803.500px;height:215px;border:2px solid #22e622;border-top:1px solid #8a8a8a;border-radius:5px 5px 0 0;background:#ececec"></div>
<div class="a" style="left:7px;top:163px;width:1799.500px;height:16px;background:#ecf1fa;border-radius:4px 4px 0 0"></div>
<div class="a" style="left:7px;top:179px;width:1799.500px;height:1.500px;background:#22e622"></div>
<div class="a" style="left:5px;top:165px;width:2px;height:14px;background:linear-gradient(90deg,#8a8a8a 0,#8a8a8a 45%,#ecf1fa 45%)"></div>
<div class="t" style="left:14px;top:167.200px;font-family:'DejaVu Sans',sans-serif;font-weight:bold;font-size:9px;color:#454545;letter-spacing:-0.06px">( Average dE: 1.11 [0.56,0.71,0.24] max: 2.17 [CIE2000] )</div>
<div class="a" style="left:8px;top:177px;width:1781px;height:198.500px;background:#f0f0f0;border-top:1.500px solid #6e6e6e;border-left:2px solid #6e6e6e;border-right:1px solid #fff;border-bottom:3px solid #fff"></div>
<div class="a" style="left:10px;top:178px;width:53.5px;height:22px;background:#f0f0f0"></div>
<div class="a" style="left:64.0px;top:178px;width:341.5px;height:22px;background:#f0f0f0"></div>
<div class="t ui" style="left:63.5px;top:183.5px;width:342.0px;text-align:center;font-weight:bold">0</div>
<div class="a" style="left:406.0px;top:178px;width:338.5px;height:22px;background:#bdf0bd"></div>
<div class="t ui" style="left:405.5px;top:183.5px;width:339.0px;text-align:center;font-weight:bold">25</div>
<div class="a" style="left:745.0px;top:178px;width:337.5px;height:22px;background:#8eee8e"></div>
<div class="t ui" style="left:744.5px;top:183.5px;width:338.0px;text-align:center;font-weight:bold">50</div>
<div class="a" style="left:1083.0px;top:178px;width:343.5px;height:22px;background:#5eee5e"></div>
<div class="t ui" style="left:1082.5px;top:183.5px;width:344.0px;text-align:center;font-weight:bold">75</div>
<div class="a" style="left:1427.0px;top:178px;width:343.5px;height:22px;background:#2eee2e"></div>
<div class="t ui" style="left:1426.5px;top:183.5px;width:344.0px;text-align:center;font-weight:bold">100</div>
<div class="t ui" style="left:10px;top:183.5px;width:53.5px;text-align:center;font-weight:bold">% Sat</div>
<div class="a" style="left:10px;top:200px;width:1760.5px;height:1px;background:#6e6e6e"></div>
<div class="a" style="left:64.0px;top:201.0px;width:341.5px;height:24px;background:#fff"></div>
<div class="t ui" style="left:63.5px;top:208.0px;width:340.0px;text-align:right;">0.3081</div>
<div class="a" style="left:406.0px;top:201.0px;width:338.5px;height:24px;background:#fff"></div>
<div class="t ui" style="left:405.5px;top:208.0px;width:337.0px;text-align:right;">0.3079</div>
<div class="a" style="left:745.0px;top:201.0px;width:337.5px;height:24px;background:#fff"></div>
<div class="t ui" style="left:744.5px;top:208.0px;width:336.0px;text-align:right;">0.3053</div>
<div class="a" style="left:1083.0px;top:201.0px;width:343.5px;height:24px;background:#fff"></div>
<div class="t ui" style="left:1082.5px;top:208.0px;width:342.0px;text-align:right;">0.3037</div>
<div class="a" style="left:1427.0px;top:201.0px;width:343.5px;height:24px;background:#fff"></div>
<div class="t ui" style="left:1426.5px;top:208.0px;width:342.0px;text-align:right;">0.3018</div>
<div class="a" style="left:10px;top:201.0px;width:53.5px;height:24px;background:#f0f0f0"></div>
<div class="t ui" style="left:10px;top:207.5px;width:53.5px;text-align:center;font-weight:bold">x</div>
<div class="a" style="left:10px;top:225.0px;width:53.5px;height:1px;background:#6e6e6e"></div>
<div class="a" style="left:63.5px;top:225.0px;width:1707.0px;height:1px;background:#c6c6c6"></div>
<div class="a" style="left:64.0px;top:226.0px;width:341.5px;height:24px;background:#fff"></div>
<div class="t ui" style="left:63.5px;top:233.0px;width:340.0px;text-align:right;">0.3264</div>
<div class="a" style="left:406.0px;top:226.0px;width:338.5px;height:24px;background:#fff"></div>
<div class="t ui" style="left:405.5px;top:233.0px;width:337.0px;text-align:right;">0.4006</div>
<div class="a" style="left:745.0px;top:226.0px;width:337.5px;height:24px;background:#fff"></div>
<div class="t ui" style="left:744.5px;top:233.0px;width:336.0px;text-align:right;">0.4711</div>
<div class="a" style="left:1083.0px;top:226.0px;width:343.5px;height:24px;background:#fff"></div>
<div class="t ui" style="left:1082.5px;top:233.0px;width:342.0px;text-align:right;">0.5407</div>
<div class="a" style="left:1427.0px;top:226.0px;width:343.5px;height:24px;background:#fff"></div>
<div class="t ui" style="left:1426.5px;top:233.0px;width:342.0px;text-align:right;">0.6081</div>
<div class="a" style="left:10px;top:226.0px;width:53.5px;height:24px;background:#f0f0f0"></div>
<div class="t ui" style="left:10px;top:232.5px;width:53.5px;text-align:center;font-weight:bold">y</div>
<div class="a" style="left:10px;top:250.0px;width:53.5px;height:1px;background:#6e6e6e"></div>
<div class="a" style="left:63.5px;top:250.0px;width:1707.0px;height:1px;background:#c6c6c6"></div>
<div class="a" style="left:64.0px;top:251.0px;width:341.5px;height:24px;background:#fff"></div>
<div class="t ui" style="left:63.5px;top:258.0px;width:340.0px;text-align:right;">144.009</div>
<div class="a" style="left:406.0px;top:251.0px;width:338.5px;height:24px;background:#fff"></div>
<div class="t ui" style="left:405.5px;top:258.0px;width:337.0px;text-align:right;">143.479</div>
<div class="a" style="left:745.0px;top:251.0px;width:337.5px;height:24px;background:#fff"></div>
<div class="t ui" style="left:744.5px;top:258.0px;width:336.0px;text-align:right;">143.130</div>
<div class="a" style="left:1083.0px;top:251.0px;width:343.5px;height:24px;background:#fff"></div>
<div class="t ui" style="left:1082.5px;top:258.0px;width:342.0px;text-align:right;">142.792</div>
<div class="a" style="left:1427.0px;top:251.0px;width:343.5px;height:24px;background:#fff"></div>
<div class="t ui" style="left:1426.5px;top:258.0px;width:342.0px;text-align:right;">143.218</div>
<div class="a" style="left:10px;top:251.0px;width:53.5px;height:24px;background:#f0f0f0"></div>
<div class="t ui" style="left:10px;top:257.5px;width:53.5px;text-align:center;font-weight:bold">Y</div>
<div class="a" style="left:10px;top:275.0px;width:53.5px;height:1px;background:#6e6e6e"></div>
<div class="a" style="left:63.5px;top:275.0px;width:1707.0px;height:1px;background:#c6c6c6"></div>
<div class="a" style="left:64.0px;top:276.0px;width:341.5px;height:24px;background:#fffaa0"></div>
<div class="t ui" style="left:63.5px;top:283.0px;width:340.0px;text-align:right;font-weight:bold;">2.2</div>
<div class="a" style="left:406.0px;top:276.0px;width:338.5px;height:24px;background:#adfdaa"></div>
<div class="t ui" style="left:405.5px;top:283.0px;width:337.0px;text-align:right;font-weight:bold;">0.6</div>
<div class="a" style="left:745.0px;top:276.0px;width:337.5px;height:24px;background:#adfdaa"></div>
<div class="t ui" style="left:744.5px;top:283.0px;width:336.0px;text-align:right;font-weight:bold;">0.7</div>
<div class="a" style="left:1083.0px;top:276.0px;width:343.5px;height:24px;background:#adfdaa"></div>
<div class="t ui" style="left:1082.5px;top:283.0px;width:342.0px;text-align:right;font-weight:bold;">0.9</div>
<div class="a" style="left:1427.0px;top:276.0px;width:343.5px;height:24px;background:#adfdaa"></div>
<div class="t ui" style="left:1426.5px;top:283.0px;width:342.0px;text-align:right;font-weight:bold;">1.1</div>
<div class="a" style="left:10px;top:276.0px;width:53.5px;height:24px;background:#f0f0f0"></div>
<div class="t ui" style="left:10px;top:282.5px;width:53.5px;text-align:center;font-weight:bold">Delta E</div>
<div class="a" style="left:10px;top:300.0px;width:53.5px;height:1px;background:#6e6e6e"></div>
<div class="a" style="left:63.5px;top:300.0px;width:1707.0px;height:1px;background:#c6c6c6"></div>
<div class="a" style="left:64.0px;top:301.0px;width:341.5px;height:24px;background:#f0f0f0"></div>
<div class="t ui" style="left:63.5px;top:308.0px;width:340.0px;text-align:right;">0.0053</div>
<div class="a" style="left:406.0px;top:301.0px;width:338.5px;height:24px;background:#f0f0f0"></div>
<div class="t ui" style="left:405.5px;top:308.0px;width:337.0px;text-align:right;">0.0026</div>
<div class="a" style="left:745.0px;top:301.0px;width:337.5px;height:24px;background:#f0f0f0"></div>
<div class="t ui" style="left:744.5px;top:308.0px;width:336.0px;text-align:right;">0.0032</div>
<div class="a" style="left:1083.0px;top:301.0px;width:343.5px;height:24px;background:#f0f0f0"></div>
<div class="t ui" style="left:1082.5px;top:308.0px;width:342.0px;text-align:right;">0.0018</div>
<div class="a" style="left:1427.0px;top:301.0px;width:343.5px;height:24px;background:#f0f0f0"></div>
<div class="t ui" style="left:1426.5px;top:308.0px;width:342.0px;text-align:right;">0.0083</div>
<div class="a" style="left:10px;top:301.0px;width:53.5px;height:24px;background:#f0f0f0"></div>
<div class="t ui" style="left:10px;top:307.5px;width:53.5px;text-align:center;font-weight:bold">delta xy</div>
<div class="a" style="left:10px;top:325.0px;width:53.5px;height:1px;background:#6e6e6e"></div>
<div class="a" style="left:63.5px;top:325.0px;width:1707.0px;height:1px;background:#c6c6c6"></div>
<div class="a" style="left:64.0px;top:326.0px;width:341.5px;height:24px;background:#e1e1e1"></div>
<div class="t ui" style="left:63.5px;top:333.0px;width:340.0px;text-align:right;">-0.4 %</div>
<div class="a" style="left:406.0px;top:326.0px;width:338.5px;height:24px;background:#e1e1e1"></div>
<div class="t ui" style="left:405.5px;top:333.0px;width:337.0px;text-align:right;">-1.8 %</div>
<div class="a" style="left:745.0px;top:326.0px;width:337.5px;height:24px;background:#e1e1e1"></div>
<div class="t ui" style="left:744.5px;top:333.0px;width:336.0px;text-align:right;">-2.5 %</div>
<div class="a" style="left:1083.0px;top:326.0px;width:343.5px;height:24px;background:#e1e1e1"></div>
<div class="t ui" style="left:1082.5px;top:333.0px;width:342.0px;text-align:right;">-3.7 %</div>
<div class="a" style="left:1427.0px;top:326.0px;width:343.5px;height:24px;background:#e1e1e1"></div>
<div class="t ui" style="left:1426.5px;top:333.0px;width:342.0px;text-align:right;">-4.0 %</div>
<div class="a" style="left:10px;top:326.0px;width:53.5px;height:24px;background:#f0f0f0"></div>
<div class="t ui" style="left:10px;top:332.5px;width:53.5px;text-align:center;font-weight:bold">delta L</div>
<div class="a" style="left:10px;top:350.0px;width:53.5px;height:1px;background:#6e6e6e"></div>
<div class="a" style="left:63.5px;top:350.0px;width:1707.0px;height:1px;background:#c6c6c6"></div>
<div class="a" style="left:64.0px;top:351px;width:341.5px;height:4px;background:#f0f0f0"></div>
<div class="a" style="left:406.0px;top:351px;width:338.5px;height:4px;background:#f0f0f0"></div>
<div class="a" style="left:745.0px;top:351px;width:337.5px;height:4px;background:#f0f0f0"></div>
<div class="a" style="left:1083.0px;top:351px;width:343.5px;height:4px;background:#f0f0f0"></div>
<div class="a" style="left:1427.0px;top:351px;width:343.5px;height:4px;background:#f0f0f0"></div>
<div class="a" style="left:63.0px;top:178px;width:1px;height:177px;background:#6e6e6e"></div>
<div class="a" style="left:405.0px;top:178px;width:1px;height:23px;background:#8a8a8a"></div>
<div class="a" style="left:405.0px;top:201px;width:1px;height:154px;background:#b4b4b4"></div>
<div class="a" style="left:744.0px;top:178px;width:1px;height:23px;background:#8a8a8a"></div>
<div class="a" style="left:744.0px;top:201px;width:1px;height:154px;background:#b4b4b4"></div>
<div class="a" style="left:1082.0px;top:178px;width:1px;height:23px;background:#8a8a8a"></div>
<div class="a" style="left:1082.0px;top:201px;width:1px;height:154px;background:#b4b4b4"></div>
<div class="a" style="left:1426.0px;top:178px;width:1px;height:23px;background:#8a8a8a"></div>
<div class="a" style="left:1426.0px;top:201px;width:1px;height:154px;background:#b4b4b4"></div>
<div class="a" style="left:1770.0px;top:178px;width:1px;height:23px;background:#8a8a8a"></div>
<div class="a" style="left:1770.0px;top:201px;width:1px;height:154px;background:#b4b4b4"></div>
<div class="a" style="left:1779px;top:194px;width:2px;height:144px;background:#8a8a8a;border-radius:1px"></div>
<div class="a" style="left:10px;top:355px;width:1778px;height:17.500px;background:#f0f0f0"></div>
<svg class="a" style="left:14px;top:360px" width="7" height="9"><path d="M6.500 0v9L0.500 4.500z" fill="#b9b9b9"/></svg>
<svg class="a" style="left:1759px;top:360px" width="7" height="9"><path d="M0.500 0v9l6-4.500z" fill="#b9b9b9"/></svg>
<div class="wrap" style="left:1811px;top:158px;width:89px;height:106px;border-width:3px"></div>
<div class="pnl" style="left:1815px;top:162px;width:80px;height:99px"><div class="hd"><span class="vb">Display</span></div><div class="a" style="left:6px;top:17.5px;width:67px;height:15px;background:#f0f0f0"></div><div class="rd" style="left:7px;top:17px;background:#f0f0f0;"></div><div class="t vd" style="left:25px;top:19px;color:#a0a0a0;font-size:12px">Sensor</div><div class="a" style="left:6px;top:33.5px;width:67px;height:15px;background:#f0f0f0"></div><div class="rd" style="left:7px;top:33px;"></div><div class="t vd" style="left:25px;top:35px;color:#000;font-size:12px">RGB</div><div class="a" style="left:6px;top:50.0px;width:67px;height:15px;background:#f0f0f0"></div><div class="rd" style="left:7px;top:49.5px;"></div><div class="t vd" style="left:25px;top:51.5px;color:#000;font-size:12px">XYZ</div><div class="a" style="left:6px;top:65.5px;width:67px;height:15px;background:#f0f0f0"></div><div class="rd" style="left:7px;top:65px;"></div><div class="t vd" style="left:25px;top:67px;color:#000;font-size:12px">xyz</div><div class="a" style="left:6px;top:81.0px;width:67px;height:15px;background:#f0f0f0"></div><div class="rd" style="left:7px;top:80.5px;"></div><div class="a" style="left:10.500px;top:84.0px;width:4px;height:4px;border-radius:50%;background:#000"></div><div class="t vd" style="left:25px;top:82.5px;color:#000;font-size:12px">xyY</div></div>
<div class="btn" style="left:1812px;top:264px;width:83px;height:30px"></div>
<div class="btn" style="left:1812px;top:294.5px;width:83px;height:29.5px"></div>
<div class="btn" style="left:1812px;top:324.5px;width:83px;height:29.5px"></div>
<div class="t vd" style="left:1863px;top:275px">Go</div>
<div class="t vd" style="left:1851px;top:303.700px;letter-spacing:.1px">Delete</div>
<div class="t vd" style="left:1858px;top:333.500px">Refs</div>
<svg class="a" style="left:1818px;top:267px" width="33" height="27" viewBox="0 0 33 27"><path d="M1 1h10v17l8 8H8l-7-4z" fill="#b4b4b4"/><path d="M23 5h9v21h-8z" fill="#b4b4b4"/><path d="M1 1v21M31.500 5v21" stroke="#111" stroke-width="1.600" stroke-dasharray="1.600 1.400"/><path d="M3 5h5v2.500h-2.500v3H8v3H3zM3 15h4v2h2v3.500H3zM29.500 8h-5v2.500h2.500v3h-2.500v3h5zM29.500 19h-4v4h4z" fill="#d4d4d4" stroke="#666" stroke-width=".5"/><path d="M8 0h13c2 5 .5 9 2 13s5 5 7 7l-4 6H13c-1-6-1-9-3-13S8 5 8 0z" fill="#16c84a" stroke="#0a5a4a" stroke-width="1.200"/><path d="M10 6l11-2.500M11.500 15.500l11-4.500M14 25l13-7" stroke="#063a32" stroke-width="1.300"/><path d="M12.500 7.500l7.500-1.800 1.300 5.300-7 2.800zM15 17.500l8-3.500 4 4-9 5z" fill="#38ee6a"/></svg>
<svg class="a" style="left:1818px;top:296px" width="30" height="27" viewBox="0 0 30 27"><defs><linearGradient id="gBin" x1="0" y1="0" x2="1" y2=".6"><stop offset="0" stop-color="#f4faff"/><stop offset=".45" stop-color="#b5d9f6"/><stop offset="1" stop-color="#5fa8e6"/></linearGradient></defs><path d="M1 4.500c8-3 19-4.500 28-3.500l-3 21c-5 3.500-14 4.500-20 2.500z" fill="url(#gBin)" stroke="#dcedfb" stroke-width="1"/><path d="M1 4.500c8-3 19-4.500 28-3.500-9 1-19 3-24 6z" fill="#f2f9fe"/><ellipse cx="15.500" cy="22" rx="9.500" ry="3.200" fill="#8cc4f0" opacity=".85"/><circle cx="19.500" cy="14.500" r="4" fill="none" stroke="#12a02a" stroke-width="2.600" stroke-dasharray="9.500 3.100" transform="rotate(-35 19.500 14.500)"/><path d="M21.500 7.500l3.200 3.800-4.800.8zM17.500 21.500l-3.200-3.800 4.800-.8z" fill="#12a02a"/></svg>
<svg class="a" style="left:1818px;top:328px" width="33" height="23" viewBox="0 0 33 23"><clipPath id="cpRefs"><polygon points="0,10.7 1.4,10.7 3.2,8.4 5.1,5.2 6.5,3.8 7.9,6.1 9.3,7.5 10.6,9.3 14.4,9.8 15.7,5.2 17.1,2.4 18.5,1.3 19.9,2.4 21.8,3.8 23.1,6.1 24.5,8.9 26.4,10.7 27.8,8.9 29.2,8.4 30.6,10.3 32.1,10.7 32.1,22.800 0,22.800"/></clipPath><g clip-path="url(#cpRefs)"><rect x="0" y="0" width="2.4" height="23" fill="#00008b"/><rect x="2.3" y="0" width="2.0" height="23" fill="#ff00ff"/><rect x="4.2" y="0" width="4.0" height="23" fill="#0000ff"/><rect x="8.1" y="0" width="3.1" height="23" fill="#00ffff"/><rect x="11.1" y="0" width="4.3" height="23" fill="#00ff00"/><rect x="15.3" y="0" width="6.1" height="23" fill="#ffff00"/><rect x="21.3" y="0" width="3.8" height="23" fill="#800000"/><rect x="25" y="0" width="7.2" height="23" fill="#ff0000"/></g><polyline points="0,10.7 1.4,10.7 3.2,8.4 5.1,5.2 6.5,3.8 7.9,6.1 9.3,7.5 10.6,9.3 14.4,9.8 15.7,5.2 17.1,2.4 18.5,1.3 19.9,2.4 21.8,3.8 23.1,6.1 24.5,8.9 26.4,10.7 27.8,8.9 29.2,8.4 30.6,10.3 32.1,10.7" fill="none" stroke="#ffff00" stroke-width="1.300"/></svg>
<div class="a" style="left:1818px;top:358px;width:56px;height:18px;background:#f0f0f0"></div>
<div class="cb" style="left:1819px;top:360px"></div>
<div class="t vd" style="left:1837px;top:360.500px">Edit</div>
<div class="wrap" style="left:2px;top:384px;width:386px;height:637.5px;border-bottom-color:#b4b4b4;border-right-width:4px"></div>
<div class="a" style="left:0;top:378.6px;width:1900px;height:5px;background:linear-gradient(#9c9c9c 0,#9c9c9c 18%,#727272 18%,#727272 48%,#8a8a8a 48%)"></div>
<div class="pnl" style="left:5px;top:387px;width:377px;height:629px"><div class="hd"><span class="vb">Selected color</span></div><div class="a" style="left:12px;top:21px;width:111px;height:15px;background:#f0f0f0"></div><div class="t vd" style="left:12px;top:22.800px">RGB Levels</div><div class="a" style="left:224px;top:19px;width:127px;height:15px;background:#f0f0f0"></div><div class="t vd" style="left:235.500px;top:19.500px">Current Measure</div><div class="a" style="left:8px;top:46px;width:200px;height:86px;background:#f0f0f0"></div><div class="a" style="left:8px;top:90px;width:200px;height:1px;background:repeating-linear-gradient(90deg,#6a6a6a 0 3px,transparent 3px 6px)"></div><svg class="a" style="left:8px;top:120px" width="200" height="12" viewBox="0 0 200 12"><path d="M-1 7.500C11 -.2 39 -.2 51 7.500z" fill="#a40000" stroke="#000" stroke-width=".8"/><path d="M50 7.500C62 -.2 90 -.2 102 7.500z" fill="#00a400" stroke="#000" stroke-width=".8"/><path d="M101 7.500C113 -.2 141 -.2 153 7.500z" fill="#0000a8" stroke="#000" stroke-width=".8"/><path d="M152 7.500C164 -.2 192 -.2 204 7.500z" fill="#b8860b" stroke="#000" stroke-width=".8"/><rect x="0" y="6" width="200" height="5.800" fill="#000"/></svg><div class="t sf" style="left:3px;top:107.500px;width:60px;text-align:center;font-weight:bold;font-size:12px">0.0%</div><div class="t sf" style="left:54px;top:107.500px;width:60px;text-align:center;font-weight:bold;font-size:12px">0.0%</div><div class="t sf" style="left:105px;top:107.500px;width:60px;text-align:center;font-weight:bold;font-size:12px">0.0%</div><div class="t sf" style="left:156px;top:107.500px;width:60px;text-align:center;font-weight:bold;font-size:12px">dE 0.0</div><div class="a" style="left:10px;top:145px;width:192px;height:74px;background:#f0f0f0"></div><div class="t" style="left:29px;top:146.700px;font-weight:bold;font-size:13px;letter-spacing:.5px">Measure</div><div class="t" style="left:121px;top:146.700px;font-weight:bold;font-size:13px;letter-spacing:.4px">Reference</div><div class="t vd" style="left:12px;top:235px">Target</div><div class="a" style="left:44px;top:250px;width:116px;height:89px;border:1px solid #000;background:conic-gradient(from 0deg at 50% 50%, hsl(103 100% 50%) 0deg, hsl(86 100% 50%) 15deg, hsl(70 100% 50%) 30deg, hsl(53 100% 50%) 45deg, hsl(36 100% 50%) 60deg, hsl(19 100% 50%) 75deg, hsl(2 100% 50%) 90deg, hsl(348 100% 50%) 105deg, hsl(333 100% 50%) 120deg, hsl(320 100% 50%) 135deg, hsl(308 100% 50%) 150deg, hsl(296 100% 50%) 165deg, hsl(284 100% 50%) 180deg, hsl(271 100% 50%) 195deg, hsl(259 100% 50%) 210deg, hsl(246 100% 50%) 225deg, hsl(229 100% 50%) 240deg, hsl(208 100% 50%) 255deg, hsl(186 100% 50%) 270deg, hsl(172 100% 50%) 285deg, hsl(157 100% 50%) 300deg, hsl(143 100% 50%) 315deg, hsl(130 100% 50%) 330deg, hsl(116 100% 50%) 345deg, hsl(103 100% 50%) 360deg)"></div><svg class="a" style="left:44px;top:250px" width="116" height="89" viewBox="0 0 116 89"><rect x="17.500" y="13.500" width="81" height="62.500" rx="8" fill="#000" stroke="#fff" stroke-width="1"/><path d="M15 44.500h87M58.500 13.500v63" stroke="#fff" stroke-width="1" stroke-dasharray="3 2"/><ellipse cx="58" cy="44" rx="21.200" ry="15.400" fill="none" stroke="#fff" stroke-width="1" stroke-dasharray="3 3"/></svg><div class="a" style="left:214px;top:42px;width:153px;height:578px;border:1px solid;border-color:#6e6e6e #fff #fff #6e6e6e;box-shadow:inset 1px 1px 0 #8a8a8a;background:#f0f0f0"></div><div class="a" style="left:216px;top:44.00px;width:52px;height:21.99px;background:#f0f0f0;border-bottom:1px solid #6e6e6e;box-sizing:content-box"></div><div class="a" style="left:269px;top:44.00px;width:79px;height:21.99px;background:#fff;border-bottom:1px solid #c6c6c6;box-sizing:content-box"></div><div class="t ui" style="left:216px;top:50.50px;width:52px;text-align:center;font-weight:bold">Y cd/m<span style="font-size:8px;position:relative;top:-4px">2</span></div><div class="a" style="left:216px;top:66.99px;width:52px;height:21.99px;background:#f0f0f0;border-bottom:1px solid #6e6e6e;box-sizing:content-box"></div><div class="a" style="left:269px;top:66.99px;width:79px;height:21.99px;background:#fff;border-bottom:1px solid #c6c6c6;box-sizing:content-box"></div><div class="t ui" style="left:216px;top:73.49px;width:52px;text-align:center;font-weight:bold">Y ftL</div><div class="a" style="left:216px;top:89.98px;width:52px;height:21.99px;background:#f0f0f0;border-bottom:1px solid #6e6e6e;box-sizing:content-box"></div><div class="a" style="left:269px;top:89.98px;width:79px;height:21.99px;background:#fff;border-bottom:1px solid #c6c6c6;box-sizing:content-box"></div><div class="t ui" style="left:216px;top:96.48px;width:52px;text-align:center;font-weight:bold">T°</div><div class="a" style="left:216px;top:112.97px;width:52px;height:21.99px;background:#f0f0f0;border-bottom:1px solid #6e6e6e;box-sizing:content-box"></div><div class="a" style="left:269px;top:112.97px;width:79px;height:21.99px;background:#e1e1e1;border-bottom:1px solid #c6c6c6;box-sizing:content-box"></div><div class="t ui" style="left:216px;top:119.47px;width:52px;text-align:center;font-weight:bold">X</div><div class="a" style="left:216px;top:135.96px;width:52px;height:21.99px;background:#f0f0f0;border-bottom:1px solid #6e6e6e;box-sizing:content-box"></div><div class="a" style="left:269px;top:135.96px;width:79px;height:21.99px;background:#e1e1e1;border-bottom:1px solid #c6c6c6;box-sizing:content-box"></div><div class="t ui" style="left:216px;top:142.46px;width:52px;text-align:center;font-weight:bold">Y</div><div class="a" style="left:216px;top:158.95px;width:52px;height:21.99px;background:#f0f0f0;border-bottom:1px solid #6e6e6e;box-sizing:content-box"></div><div class="a" style="left:269px;top:158.95px;width:79px;height:21.99px;background:#e1e1e1;border-bottom:1px solid #c6c6c6;box-sizing:content-box"></div><div class="t ui" style="left:216px;top:165.45px;width:52px;text-align:center;font-weight:bold">Z</div><div class="a" style="left:216px;top:181.94px;width:52px;height:21.99px;background:#f0f0f0;border-bottom:1px solid #6e6e6e;box-sizing:content-box"></div><div class="a" style="left:269px;top:181.94px;width:79px;height:21.99px;background:#fff;border-bottom:1px solid #c6c6c6;box-sizing:content-box"></div><div class="t ui" style="left:216px;top:188.44px;width:52px;text-align:center;font-weight:bold">R</div><div class="a" style="left:216px;top:204.93px;width:52px;height:21.99px;background:#f0f0f0;border-bottom:1px solid #6e6e6e;box-sizing:content-box"></div><div class="a" style="left:269px;top:204.93px;width:79px;height:21.99px;background:#fff;border-bottom:1px solid #c6c6c6;box-sizing:content-box"></div><div class="t ui" style="left:216px;top:211.43px;width:52px;text-align:center;font-weight:bold">G</div><div class="a" style="left:216px;top:227.92px;width:52px;height:21.99px;background:#f0f0f0;border-bottom:1px solid #6e6e6e;box-sizing:content-box"></div><div class="a" style="left:269px;top:227.92px;width:79px;height:21.99px;background:#fff;border-bottom:1px solid #c6c6c6;box-sizing:content-box"></div><div class="t ui" style="left:216px;top:234.42px;width:52px;text-align:center;font-weight:bold">B</div><div class="a" style="left:216px;top:250.91px;width:52px;height:21.99px;background:#f0f0f0;border-bottom:1px solid #6e6e6e;box-sizing:content-box"></div><div class="a" style="left:269px;top:250.91px;width:79px;height:21.99px;background:#e1e1e1;border-bottom:1px solid #c6c6c6;box-sizing:content-box"></div><div class="t ui" style="left:216px;top:257.41px;width:52px;text-align:center;font-weight:bold">x</div><div class="a" style="left:216px;top:273.90px;width:52px;height:21.99px;background:#f0f0f0;border-bottom:1px solid #6e6e6e;box-sizing:content-box"></div><div class="a" style="left:269px;top:273.90px;width:79px;height:21.99px;background:#e1e1e1;border-bottom:1px solid #c6c6c6;box-sizing:content-box"></div><div class="t ui" style="left:216px;top:280.40px;width:52px;text-align:center;font-weight:bold">y</div><div class="a" style="left:216px;top:296.89px;width:52px;height:21.99px;background:#f0f0f0;border-bottom:1px solid #6e6e6e;box-sizing:content-box"></div><div class="a" style="left:269px;top:296.89px;width:79px;height:21.99px;background:#e1e1e1;border-bottom:1px solid #c6c6c6;box-sizing:content-box"></div><div class="t ui" style="left:216px;top:303.39px;width:52px;text-align:center;font-weight:bold">Y</div><div class="a" style="left:216px;top:319.88px;width:52px;height:21.99px;background:#f0f0f0;border-bottom:1px solid #6e6e6e;box-sizing:content-box"></div><div class="a" style="left:269px;top:319.88px;width:79px;height:21.99px;background:#fff;border-bottom:1px solid #c6c6c6;box-sizing:content-box"></div><div class="t ui" style="left:216px;top:326.38px;width:52px;text-align:center;font-weight:bold">x</div><div class="a" style="left:216px;top:342.87px;width:52px;height:21.99px;background:#f0f0f0;border-bottom:1px solid #6e6e6e;box-sizing:content-box"></div><div class="a" style="left:269px;top:342.87px;width:79px;height:21.99px;background:#fff;border-bottom:1px solid #c6c6c6;box-sizing:content-box"></div><div class="t ui" style="left:216px;top:349.37px;width:52px;text-align:center;font-weight:bold">y</div><div class="a" style="left:216px;top:365.86px;width:52px;height:21.99px;background:#f0f0f0;border-bottom:1px solid #6e6e6e;box-sizing:content-box"></div><div class="a" style="left:269px;top:365.86px;width:79px;height:21.99px;background:#fff;border-bottom:1px solid #c6c6c6;box-sizing:content-box"></div><div class="t ui" style="left:216px;top:372.36px;width:52px;text-align:center;font-weight:bold">z</div><div class="a" style="left:216px;top:388.85px;width:52px;height:21.99px;background:#f0f0f0;border-bottom:1px solid #6e6e6e;box-sizing:content-box"></div><div class="a" style="left:269px;top:388.85px;width:79px;height:21.99px;background:#e1e1e1;border-bottom:1px solid #c6c6c6;box-sizing:content-box"></div><div class="t ui" style="left:216px;top:395.35px;width:52px;text-align:center;font-weight:bold">L</div><div class="a" style="left:216px;top:411.84px;width:52px;height:21.99px;background:#f0f0f0;border-bottom:1px solid #6e6e6e;box-sizing:content-box"></div><div class="a" style="left:269px;top:411.84px;width:79px;height:21.99px;background:#e1e1e1;border-bottom:1px solid #c6c6c6;box-sizing:content-box"></div><div class="t ui" style="left:216px;top:418.34px;width:52px;text-align:center;font-weight:bold">a</div><div class="a" style="left:216px;top:434.83px;width:52px;height:21.99px;background:#f0f0f0;border-bottom:1px solid #6e6e6e;box-sizing:content-box"></div><div class="a" style="left:269px;top:434.83px;width:79px;height:21.99px;background:#e1e1e1;border-bottom:1px solid #c6c6c6;box-sizing:content-box"></div><div class="t ui" style="left:216px;top:441.33px;width:52px;text-align:center;font-weight:bold">b</div><div class="a" style="left:216px;top:457.82px;width:52px;height:21.99px;background:#f0f0f0;border-bottom:1px solid #6e6e6e;box-sizing:content-box"></div><div class="a" style="left:269px;top:457.82px;width:79px;height:21.99px;background:#fff;border-bottom:1px solid #c6c6c6;box-sizing:content-box"></div><div class="t ui" style="left:216px;top:464.32px;width:52px;text-align:center;font-weight:bold">L</div><div class="a" style="left:216px;top:480.81px;width:52px;height:21.99px;background:#f0f0f0;border-bottom:1px solid #6e6e6e;box-sizing:content-box"></div><div class="a" style="left:269px;top:480.81px;width:79px;height:21.99px;background:#fff;border-bottom:1px solid #c6c6c6;box-sizing:content-box"></div><div class="t ui" style="left:216px;top:487.31px;width:52px;text-align:center;font-weight:bold">C</div><div class="a" style="left:216px;top:503.80px;width:52px;height:21.99px;background:#f0f0f0;border-bottom:1px solid #6e6e6e;box-sizing:content-box"></div><div class="a" style="left:269px;top:503.80px;width:79px;height:21.99px;background:#fff;border-bottom:1px solid #c6c6c6;box-sizing:content-box"></div><div class="t ui" style="left:216px;top:510.30px;width:52px;text-align:center;font-weight:bold">H</div><div class="a" style="left:216px;top:526.79px;width:52px;height:21.99px;background:#f0f0f0;border-bottom:1px solid #6e6e6e;box-sizing:content-box"></div><div class="a" style="left:269px;top:526.79px;width:79px;height:21.99px;background:#e1e1e1;border-bottom:1px solid #c6c6c6;box-sizing:content-box"></div><div class="t ui" style="left:216px;top:533.29px;width:52px;text-align:center;font-weight:bold">L</div><div class="a" style="left:216px;top:549.78px;width:52px;height:21.99px;background:#f0f0f0;border-bottom:1px solid #6e6e6e;box-sizing:content-box"></div><div class="a" style="left:269px;top:549.78px;width:79px;height:21.99px;background:#e1e1e1;border-bottom:1px solid #c6c6c6;box-sizing:content-box"></div><div class="t ui" style="left:216px;top:556.28px;width:52px;text-align:center;font-weight:bold">M</div><div class="a" style="left:216px;top:572.77px;width:52px;height:21.99px;background:#f0f0f0;border-bottom:1px solid #6e6e6e;box-sizing:content-box"></div><div class="a" style="left:269px;top:572.77px;width:79px;height:21.99px;background:#e1e1e1;border-bottom:1px solid #c6c6c6;box-sizing:content-box"></div><div class="t ui" style="left:216px;top:579.27px;width:52px;text-align:center;font-weight:bold">S</div><div class="a" style="left:268px;top:44px;width:1px;height:551.76px;background:#6e6e6e"></div><div class="a" style="left:348px;top:44px;width:1px;height:551.76px;background:#c6c6c6"></div><div class="a" style="left:216px;top:595.76px;width:133px;height:23.24px;background:#a0a0a0"></div><svg class="a" style="left:353px;top:50px" width="9" height="7"><path d="M0 6.500h9L4.500 0.500z" fill="#b9b9b9"/></svg><svg class="a" style="left:353px;top:608px" width="9" height="7"><path d="M0 0.500h9L4.500 6.500z" fill="#b9b9b9"/></svg></div>
<svg width="0" height="0" style="position:absolute"><defs><linearGradient id="gAx" x1="0" y1="0" x2="1" y2="0"><stop offset="0" stop-color="#000" stop-opacity=".65"/><stop offset=".5" stop-color="#000" stop-opacity=".3"/><stop offset="1" stop-color="#000" stop-opacity=".08"/></linearGradient></defs></svg>
<div class="wrap" style="left:388px;top:384px;width:1512px;height:637.5px;border-bottom-color:#b4b4b4"></div>
<div class="pnl" style="left:391px;top:387px;width:1504px;height:629px"><div class="hd"><span class="vb">Information</span></div><div class="a" style="left:4px;top:21px;width:302px;height:22px;border:1px solid;border-color:#7a7a7a #fff #fff #7a7a7a;background:#fff;box-shadow:inset 1px 1px 0 #5f5f5f"></div><div class="a" style="left:8px;top:25px;width:279px;height:16px;background:#0078d7"></div><div class="t vd" style="left:9px;top:26.800px;color:#fff;letter-spacing:-.15px">RGB - Gamma</div><div class="btn" style="left:287px;top:24px;width:17px;height:17px;background:#f0f0f0;border-color:#fff #6d6d6d #6d6d6d #fff"></div><svg class="a" style="left:291px;top:30px" width="8" height="5"><path d="M0 0h7.500L3.750 4.500z" fill="#000"/></svg></div>
<div class="a" style="left:398px;top:439px;width:749px;height:570px;border:2px solid;border-color:#8a8a8a #fff #fff #8a8a8a;background:#dcdcdc"></div>
<div class="a" style="left:400px;top:441px;width:745px;height:566px;border:2px solid;border-color:#a8a8a8 #e6e6e6 #e6e6e6 #a8a8a8"></div>
<div class="a" style="left:1146px;top:439px;width:749px;height:570px;border:2px solid;border-color:#8a8a8a #fff #fff #8a8a8a;background:#dcdcdc"></div>
<div class="a" style="left:1148px;top:441px;width:745px;height:566px;border:2px solid;border-color:#a8a8a8 #e6e6e6 #e6e6e6 #a8a8a8"></div>
<div class="a" style="left:402px;top:443px;width:740.5px;height:562px;background:linear-gradient(90deg,#242424,#fefefe)"></div>
<svg class="a" style="left:402px;top:443px" width="740.5" height="562" viewBox="0 0 740.5 562"><path d="M.5 0V562" stroke="#0b4a4a" stroke-width="1" shape-rendering="crispEdges"/><rect x="0" y="561" width="740.5" height="1" fill="url(#gAx)"/><path d="M74.5 0V562" stroke="#0b4a4a" stroke-width="1" shape-rendering="crispEdges"/><path d="M148.5 0V562" stroke="#0b4a4a" stroke-width="1" shape-rendering="crispEdges"/><path d="M222.5 0V562" stroke="#0b4a4a" stroke-width="1" shape-rendering="crispEdges"/><path d="M296.5 0V562" stroke="#0b4a4a" stroke-width="1" shape-rendering="crispEdges"/><path d="M370.5 0V562" stroke="#0b4a4a" stroke-width="1" shape-rendering="crispEdges"/><path d="M444.5 0V562" stroke="#0b4a4a" stroke-width="1" shape-rendering="crispEdges"/><path d="M518.5 0V562" stroke="#0b4a4a" stroke-width="1" shape-rendering="crispEdges"/><path d="M592.5 0V562" stroke="#0b4a4a" stroke-width="1" shape-rendering="crispEdges"/><path d="M666.5 0V562" stroke="#0b4a4a" stroke-width="1" shape-rendering="crispEdges"/><path d="M0 28.5H740.5" stroke="#0b4a4a" stroke-width="1" shape-rendering="crispEdges"/><path d="M0 56.5H740.5" stroke="#0b4a4a" stroke-width="1" shape-rendering="crispEdges"/><path d="M0 84.5H740.5" stroke="#0b4a4a" stroke-width="1" shape-rendering="crispEdges"/><path d="M0 112.5H740.5" stroke="#0b4a4a" stroke-width="1" shape-rendering="crispEdges"/><path d="M0 140.5H740.5" stroke="#0b4a4a" stroke-width="1" shape-rendering="crispEdges"/><path d="M0 140.5H740.5" stroke="#fff" stroke-width="1" stroke-dasharray="3 3" shape-rendering="crispEdges"/><path d="M0 168.5H740.5" stroke="#0b4a4a" stroke-width="1" shape-rendering="crispEdges"/><path d="M0 196.5H740.5" stroke="#0b4a4a" stroke-width="1" shape-rendering="crispEdges"/><path d="M0 224.5H740.5" stroke="#0b4a4a" stroke-width="1" shape-rendering="crispEdges"/><path d="M0 252.5H740.5" stroke="#0b4a4a" stroke-width="1" shape-rendering="crispEdges"/><path d="M0 337.5H740.5" stroke="#0b4a4a" stroke-width="1" shape-rendering="crispEdges"/><path d="M0 393.5H740.5" stroke="#0b4a4a" stroke-width="1" shape-rendering="crispEdges"/><path d="M0 449.5H740.5" stroke="#0b4a4a" stroke-width="1" shape-rendering="crispEdges"/><path d="M0 505.5H740.5" stroke="#0b4a4a" stroke-width="1" shape-rendering="crispEdges"/><text x="2.500" y="24.0" font-family="Liberation Serif" font-size="13.500" fill="#fff">140%</text><text x="2.500" y="52.1" font-family="Liberation Serif" font-size="13.500" fill="#fff">130%</text><text x="2.500" y="80.1" font-family="Liberation Serif" font-size="13.500" fill="#fff">120%</text><text x="2.500" y="108.1" font-family="Liberation Serif" font-size="13.500" fill="#fff">110%</text><text x="2.500" y="136.2" font-family="Liberation Serif" font-size="13.500" fill="#fff">100%</text><text x="2.500" y="164.2" font-family="Liberation Serif" font-size="13.500" fill="#fff">90%</text><text x="2.500" y="192.3" font-family="Liberation Serif" font-size="13.500" fill="#fff">80%</text><text x="2.500" y="220.4" font-family="Liberation Serif" font-size="13.500" fill="#fff">70%</text><text x="2.500" y="248.4" font-family="Liberation Serif" font-size="13.500" fill="#fff">60%</text><text x="2.500" y="333.4" font-family="Liberation Serif" font-size="13.500" fill="#fff">8</text><text x="2.500" y="389.3" font-family="Liberation Serif" font-size="13.500" fill="#fff">6</text><text x="2.500" y="445.3" font-family="Liberation Serif" font-size="13.500" fill="#fff">4</text><text x="2.500" y="501.2" font-family="Liberation Serif" font-size="13.500" fill="#fff">2</text><text x="77.0" y="276.8" font-family="Liberation Serif" font-size="13.500" fill="rgb(230,230,230)">10% White</text><text x="151.1" y="276.8" font-family="Liberation Serif" font-size="13.500" fill="rgb(204,204,204)">20% White</text><text x="225.1" y="276.8" font-family="Liberation Serif" font-size="13.500" fill="rgb(178,178,178)">30% White</text><text x="299.2" y="276.8" font-family="Liberation Serif" font-size="13.500" fill="rgb(153,153,153)">40% White</text><text x="373.2" y="276.8" font-family="Liberation Serif" font-size="13.500" fill="rgb(128,128,128)">50% White</text><text x="447.3" y="276.8" font-family="Liberation Serif" font-size="13.500" fill="rgb(102,102,102)">60% White</text><text x="521.4" y="276.8" font-family="Liberation Serif" font-size="13.500" fill="rgb(77,77,77)">70% White</text><text x="595.4" y="276.8" font-family="Liberation Serif" font-size="13.500" fill="rgb(51,51,51)">80% White</text><text x="669.4" y="276.8" font-family="Liberation Serif" font-size="13.500" fill="rgb(25,25,25)">90% White</text><text x="77.0" y="558.0" font-family="Liberation Serif" font-size="13.500" fill="rgb(230,230,230)">10% White</text><text x="151.1" y="558.0" font-family="Liberation Serif" font-size="13.500" fill="rgb(204,204,204)">20% White</text><text x="225.1" y="558.0" font-family="Liberation Serif" font-size="13.500" fill="rgb(178,178,178)">30% White</text><text x="299.2" y="558.0" font-family="Liberation Serif" font-size="13.500" fill="rgb(153,153,153)">40% White</text><text x="373.2" y="558.0" font-family="Liberation Serif" font-size="13.500" fill="rgb(128,128,128)">50% White</text><text x="447.3" y="558.0" font-family="Liberation Serif" font-size="13.500" fill="rgb(102,102,102)">60% White</text><text x="521.4" y="558.0" font-family="Liberation Serif" font-size="13.500" fill="rgb(77,77,77)">70% White</text><text x="595.4" y="558.0" font-family="Liberation Serif" font-size="13.500" fill="rgb(51,51,51)">80% White</text><text x="669.4" y="558.0" font-family="Liberation Serif" font-size="13.500" fill="rgb(25,25,25)">90% White</text><text x="381.7" y="13.6" font-family="Liberation Sans" font-weight="bold" font-size="14.500" text-anchor="middle" fill="#d6d600">Gray Scale Balance w/gamma</text><text x="730.5" y="519.5" font-family="Liberation Sans" font-weight="bold" font-size="16" text-anchor="end" fill="#8c8c8c">hcfr.sourceforge.net</text><polyline points="31.2,-45.0 70.6,106.8 107.8,131.8 144.9,119.9 182.0,133.8 219.1,143.6 256.2,141.3 293.4,142.9 330.5,143.6 367.6,146.8 404.7,152.0 441.8,148.0 479.0,147.2 516.1,148.0 553.2,148.0 590.3,148.8 627.4,147.2 664.6,148.8 701.7,150.0 738.8,152.0" fill="none" stroke="#ff0000" stroke-width="2" stroke-linejoin="round" shape-rendering="crispEdges"/><polyline points="41.8,-45.0 70.6,64.5 107.8,101.7 144.9,97.3 182.0,116.3 219.1,124.6 256.2,122.3 293.4,122.3 330.5,122.3 367.6,129.0 404.7,131.0 441.8,129.8 479.0,129.8 516.1,131.8 553.2,132.6 590.3,134.5 627.4,136.5 664.6,134.5 701.7,134.5 738.8,136.1" fill="none" stroke="#00ff00" stroke-width="2" stroke-linejoin="round" shape-rendering="crispEdges"/><polyline points="44.3,-45.0 70.6,62.5 107.8,99.7 144.9,94.2 182.0,119.5 219.1,120.7 256.2,119.9 293.4,117.1 330.5,119.1 367.6,120.7 404.7,127.0 441.8,124.3 479.0,124.6 516.1,124.6 553.2,127.0 590.3,129.8 627.4,129.0 664.6,129.8 701.7,130.6 738.8,133.4" fill="none" stroke="#0000ff" stroke-width="2" stroke-linejoin="round" shape-rendering="crispEdges"/><rect x="66.6" y="102.8" width="8" height="8" fill="#ff0000"/><rect x="103.8" y="127.8" width="8" height="8" fill="#ff0000"/><rect x="140.9" y="115.9" width="8" height="8" fill="#ff0000"/><rect x="178.0" y="129.8" width="8" height="8" fill="#ff0000"/><rect x="215.1" y="139.6" width="8" height="8" fill="#ff0000"/><rect x="252.2" y="137.3" width="8" height="8" fill="#ff0000"/><rect x="289.4" y="138.9" width="8" height="8" fill="#ff0000"/><rect x="326.5" y="139.6" width="8" height="8" fill="#ff0000"/><rect x="363.6" y="142.8" width="8" height="8" fill="#ff0000"/><rect x="400.7" y="148.0" width="8" height="8" fill="#ff0000"/><rect x="437.8" y="144.0" width="8" height="8" fill="#ff0000"/><rect x="475.0" y="143.2" width="8" height="8" fill="#ff0000"/><rect x="512.1" y="144.0" width="8" height="8" fill="#ff0000"/><rect x="549.2" y="144.0" width="8" height="8" fill="#ff0000"/><rect x="586.3" y="144.8" width="8" height="8" fill="#ff0000"/><rect x="623.4" y="143.2" width="8" height="8" fill="#ff0000"/><rect x="660.6" y="144.8" width="8" height="8" fill="#ff0000"/><rect x="697.7" y="146.0" width="8" height="8" fill="#ff0000"/><rect x="734.8" y="148.0" width="8" height="8" fill="#ff0000"/><rect x="66.6" y="60.5" width="8" height="8" fill="#00ff00"/><rect x="103.8" y="97.7" width="8" height="8" fill="#00ff00"/><rect x="140.9" y="93.3" width="8" height="8" fill="#00ff00"/><rect x="178.0" y="112.3" width="8" height="8" fill="#00ff00"/><rect x="215.1" y="120.6" width="8" height="8" fill="#00ff00"/><rect x="252.2" y="118.3" width="8" height="8" fill="#00ff00"/><rect x="289.4" y="118.3" width="8" height="8" fill="#00ff00"/><rect x="326.5" y="118.3" width="8" height="8" fill="#00ff00"/><rect x="363.6" y="125.0" width="8" height="8" fill="#00ff00"/><rect x="400.7" y="127.0" width="8" height="8" fill="#00ff00"/><rect x="437.8" y="125.8" width="8" height="8" fill="#00ff00"/><rect x="475.0" y="125.8" width="8" height="8" fill="#00ff00"/><rect x="512.1" y="127.8" width="8" height="8" fill="#00ff00"/><rect x="549.2" y="128.6" width="8" height="8" fill="#00ff00"/><rect x="586.3" y="130.5" width="8" height="8" fill="#00ff00"/><rect x="623.4" y="132.5" width="8" height="8" fill="#00ff00"/><rect x="660.6" y="130.5" width="8" height="8" fill="#00ff00"/><rect x="697.7" y="130.5" width="8" height="8" fill="#00ff00"/><rect x="734.8" y="132.1" width="8" height="8" fill="#00ff00"/><rect x="66.6" y="58.5" width="8" height="8" fill="#0000ff"/><rect x="103.8" y="95.7" width="8" height="8" fill="#0000ff"/><rect x="140.9" y="90.2" width="8" height="8" fill="#0000ff"/><rect x="178.0" y="115.5" width="8" height="8" fill="#0000ff"/><rect x="215.1" y="116.7" width="8" height="8" fill="#0000ff"/><rect x="252.2" y="115.9" width="8" height="8" fill="#0000ff"/><rect x="289.4" y="113.1" width="8" height="8" fill="#0000ff"/><rect x="326.5" y="115.1" width="8" height="8" fill="#0000ff"/><rect x="363.6" y="116.7" width="8" height="8" fill="#0000ff"/><rect x="400.7" y="123.0" width="8" height="8" fill="#0000ff"/><rect x="437.8" y="120.3" width="8" height="8" fill="#0000ff"/><rect x="475.0" y="120.6" width="8" height="8" fill="#0000ff"/><rect x="512.1" y="120.6" width="8" height="8" fill="#0000ff"/><rect x="549.2" y="123.0" width="8" height="8" fill="#0000ff"/><rect x="586.3" y="125.8" width="8" height="8" fill="#0000ff"/><rect x="623.4" y="125.0" width="8" height="8" fill="#0000ff"/><rect x="660.6" y="125.8" width="8" height="8" fill="#0000ff"/><rect x="697.7" y="126.6" width="8" height="8" fill="#0000ff"/><rect x="734.8" y="129.4" width="8" height="8" fill="#0000ff"/><rect x="-1" y="136.7" width="4" height="7" fill="#fff"/><polyline points="33.5,553.9 70.6,537.7 107.8,526.2 144.9,523.8 182.0,526.2 219.1,521.8 256.2,517.9 293.4,507.6 330.5,500.9 367.6,502.8 404.7,494.5 441.8,496.9 479.0,498.5 516.1,497.7 553.2,499.3 590.3,497.7 627.4,506.8 664.6,497.7 701.7,491.0 738.8,483.8" fill="none" stroke="#ff00ff" stroke-width="2" stroke-linejoin="round" shape-rendering="crispEdges"/><rect x="29.5" y="549.9" width="8" height="8" fill="#ff00ff"/><rect x="66.6" y="533.7" width="8" height="8" fill="#ff00ff"/><rect x="103.8" y="522.2" width="8" height="8" fill="#ff00ff"/><rect x="140.9" y="519.8" width="8" height="8" fill="#ff00ff"/><rect x="178.0" y="522.2" width="8" height="8" fill="#ff00ff"/><rect x="215.1" y="517.8" width="8" height="8" fill="#ff00ff"/><rect x="252.2" y="513.9" width="8" height="8" fill="#ff00ff"/><rect x="289.4" y="503.6" width="8" height="8" fill="#ff00ff"/><rect x="326.5" y="496.9" width="8" height="8" fill="#ff00ff"/><rect x="363.6" y="498.8" width="8" height="8" fill="#ff00ff"/><rect x="400.7" y="490.5" width="8" height="8" fill="#ff00ff"/><rect x="437.8" y="492.9" width="8" height="8" fill="#ff00ff"/><rect x="475.0" y="494.5" width="8" height="8" fill="#ff00ff"/><rect x="512.1" y="493.7" width="8" height="8" fill="#ff00ff"/><rect x="549.2" y="495.3" width="8" height="8" fill="#ff00ff"/><rect x="586.3" y="493.7" width="8" height="8" fill="#ff00ff"/><rect x="623.4" y="502.8" width="8" height="8" fill="#ff00ff"/><rect x="660.6" y="493.7" width="8" height="8" fill="#ff00ff"/><rect x="697.7" y="487.0" width="8" height="8" fill="#ff00ff"/><rect x="734.8" y="479.8" width="8" height="8" fill="#ff00ff"/></svg>
<div class="a" style="left:1150px;top:443px;width:740.5px;height:562px;background:linear-gradient(90deg,#242424,#fefefe)"></div>
<svg class="a" style="left:1150px;top:443px" width="740.5" height="562" viewBox="0 0 740.5 562"><path d="M74.5 0V562" stroke="#0b4a4a" stroke-width="1" shape-rendering="crispEdges"/><path d="M148.5 0V562" stroke="#0b4a4a" stroke-width="1" shape-rendering="crispEdges"/><path d="M222.5 0V562" stroke="#0b4a4a" stroke-width="1" shape-rendering="crispEdges"/><path d="M296.5 0V562" stroke="#0b4a4a" stroke-width="1" shape-rendering="crispEdges"/><path d="M370.5 0V562" stroke="#0b4a4a" stroke-width="1" shape-rendering="crispEdges"/><path d="M444.5 0V562" stroke="#0b4a4a" stroke-width="1" shape-rendering="crispEdges"/><path d="M518.5 0V562" stroke="#0b4a4a" stroke-width="1" shape-rendering="crispEdges"/><path d="M592.5 0V562" stroke="#0b4a4a" stroke-width="1" shape-rendering="crispEdges"/><path d="M666.5 0V562" stroke="#0b4a4a" stroke-width="1" shape-rendering="crispEdges"/><path d="M.5 0V562" stroke="#0b4a4a" stroke-width="1" shape-rendering="crispEdges"/><rect x="0" y="561" width="740.5" height="1" fill="url(#gAx)"/><path d="M0 28.5H740.5" stroke="#0b4a4a" stroke-width="1" shape-rendering="crispEdges"/><path d="M0 56.5H740.5" stroke="#0b4a4a" stroke-width="1" shape-rendering="crispEdges"/><path d="M0 84.5H740.5" stroke="#0b4a4a" stroke-width="1" shape-rendering="crispEdges"/><path d="M0 112.5H740.5" stroke="#0b4a4a" stroke-width="1" shape-rendering="crispEdges"/><path d="M0 140.5H740.5" stroke="#0b4a4a" stroke-width="1" shape-rendering="crispEdges"/><path d="M0 168.5H740.5" stroke="#0b4a4a" stroke-width="1" shape-rendering="crispEdges"/><path d="M0 197.5H740.5" stroke="#0b4a4a" stroke-width="1" shape-rendering="crispEdges"/><path d="M0 225.5H740.5" stroke="#0b4a4a" stroke-width="1" shape-rendering="crispEdges"/><path d="M0 253.5H740.5" stroke="#0b4a4a" stroke-width="1" shape-rendering="crispEdges"/><path d="M0 281.5H740.5" stroke="#0b4a4a" stroke-width="1" shape-rendering="crispEdges"/><path d="M0 309.5H740.5" stroke="#0b4a4a" stroke-width="1" shape-rendering="crispEdges"/><path d="M0 337.5H740.5" stroke="#0b4a4a" stroke-width="1" shape-rendering="crispEdges"/><path d="M0 365.5H740.5" stroke="#0b4a4a" stroke-width="1" shape-rendering="crispEdges"/><path d="M0 393.5H740.5" stroke="#0b4a4a" stroke-width="1" shape-rendering="crispEdges"/><path d="M0 421.5H740.5" stroke="#0b4a4a" stroke-width="1" shape-rendering="crispEdges"/><path d="M0 449.5H740.5" stroke="#0b4a4a" stroke-width="1" shape-rendering="crispEdges"/><path d="M0 477.5H740.5" stroke="#0b4a4a" stroke-width="1" shape-rendering="crispEdges"/><path d="M0 505.5H740.5" stroke="#0b4a4a" stroke-width="1" shape-rendering="crispEdges"/><path d="M0 533.5H740.5" stroke="#0b4a4a" stroke-width="1" shape-rendering="crispEdges"/><text x="2.500" y="24.4" font-family="Liberation Serif" font-size="13.500" fill="#fff">2.9</text><text x="2.500" y="52.4" font-family="Liberation Serif" font-size="13.500" fill="#fff">2.8</text><text x="2.500" y="80.5" font-family="Liberation Serif" font-size="13.500" fill="#fff">2.7</text><text x="2.500" y="108.5" font-family="Liberation Serif" font-size="13.500" fill="#fff">2.6</text><text x="2.500" y="136.6" font-family="Liberation Serif" font-size="13.500" fill="#fff">2.5</text><text x="2.500" y="164.6" font-family="Liberation Serif" font-size="13.500" fill="#fff">2.4</text><text x="2.500" y="192.7" font-family="Liberation Serif" font-size="13.500" fill="#fff">2.3</text><text x="2.500" y="220.8" font-family="Liberation Serif" font-size="13.500" fill="#fff">2.2</text><text x="2.500" y="248.8" font-family="Liberation Serif" font-size="13.500" fill="#fff">2.1</text><text x="2.500" y="276.9" font-family="Liberation Serif" font-size="13.500" fill="#fff">2</text><text x="2.500" y="304.9" font-family="Liberation Serif" font-size="13.500" fill="#fff">1.9</text><text x="2.500" y="333.0" font-family="Liberation Serif" font-size="13.500" fill="#fff">1.8</text><text x="2.500" y="361.0" font-family="Liberation Serif" font-size="13.500" fill="#fff">1.7</text><text x="2.500" y="389.0" font-family="Liberation Serif" font-size="13.500" fill="#fff">1.6</text><text x="2.500" y="417.1" font-family="Liberation Serif" font-size="13.500" fill="#fff">1.5</text><text x="2.500" y="445.1" font-family="Liberation Serif" font-size="13.500" fill="#fff">1.4</text><text x="2.500" y="473.2" font-family="Liberation Serif" font-size="13.500" fill="#fff">1.3</text><text x="2.500" y="501.2" font-family="Liberation Serif" font-size="13.500" fill="#fff">1.2</text><text x="2.500" y="529.3" font-family="Liberation Serif" font-size="13.500" fill="#fff">1.1</text><text x="77.0" y="558.0" font-family="Liberation Serif" font-size="13.500" fill="rgb(230,230,230)">10% White</text><text x="151.1" y="558.0" font-family="Liberation Serif" font-size="13.500" fill="rgb(204,204,204)">20% White</text><text x="225.1" y="558.0" font-family="Liberation Serif" font-size="13.500" fill="rgb(178,178,178)">30% White</text><text x="299.2" y="558.0" font-family="Liberation Serif" font-size="13.500" fill="rgb(153,153,153)">40% White</text><text x="373.2" y="558.0" font-family="Liberation Serif" font-size="13.500" fill="rgb(128,128,128)">50% White</text><text x="447.3" y="558.0" font-family="Liberation Serif" font-size="13.500" fill="rgb(102,102,102)">60% White</text><text x="521.4" y="558.0" font-family="Liberation Serif" font-size="13.500" fill="rgb(77,77,77)">70% White</text><text x="595.4" y="558.0" font-family="Liberation Serif" font-size="13.500" fill="rgb(51,51,51)">80% White</text><text x="669.4" y="558.0" font-family="Liberation Serif" font-size="13.500" fill="rgb(25,25,25)">90% White</text><text x="382.5" y="14.0" font-family="Liberation Sans" font-weight="bold" font-size="15.100" text-anchor="middle" fill="#d6d600">EOTF(Gamma)</text><text x="730.3" y="520.2" font-family="Liberation Sans" font-weight="bold" font-size="16" text-anchor="end" fill="#8c8c8c">hcfr.sourceforge.net</text><path d="M33.2 168.5H706.2" stroke="#fff" stroke-width="1" stroke-dasharray="3 3" shape-rendering="crispEdges"/><rect x="29.2" y="163.8" width="8" height="8" fill="#e6e6e6"/><rect x="66.3" y="163.8" width="8" height="8" fill="#e6e6e6"/><rect x="103.5" y="163.8" width="8" height="8" fill="#e6e6e6"/><rect x="140.7" y="163.8" width="8" height="8" fill="#e6e6e6"/><rect x="177.8" y="163.8" width="8" height="8" fill="#e6e6e6"/><rect x="215.0" y="163.8" width="8" height="8" fill="#e6e6e6"/><rect x="252.2" y="163.8" width="8" height="8" fill="#e6e6e6"/><rect x="289.4" y="163.8" width="8" height="8" fill="#e6e6e6"/><rect x="326.5" y="163.8" width="8" height="8" fill="#e6e6e6"/><rect x="363.7" y="163.8" width="8" height="8" fill="#e6e6e6"/><rect x="400.9" y="163.8" width="8" height="8" fill="#e6e6e6"/><rect x="438.0" y="163.8" width="8" height="8" fill="#e6e6e6"/><rect x="475.2" y="163.8" width="8" height="8" fill="#e6e6e6"/><rect x="512.4" y="163.8" width="8" height="8" fill="#e6e6e6"/><rect x="549.6" y="163.8" width="8" height="8" fill="#e6e6e6"/><rect x="586.7" y="163.8" width="8" height="8" fill="#e6e6e6"/><rect x="623.9" y="163.8" width="8" height="8" fill="#e6e6e6"/><rect x="661.1" y="163.8" width="8" height="8" fill="#e6e6e6"/><rect x="698.2" y="163.8" width="8" height="8" fill="#e6e6e6"/><polyline points="33.2,218.5 70.3,193.7 107.5,184.0 144.7,188.9 181.8,181.2 219.0,177.1 256.2,181.2 293.4,181.6 330.5,182.8 367.7,179.1 404.9,175.9 442.0,181.2 479.2,182.8 516.4,182.4 553.6,182.8 590.7,179.9 627.9,175.9 665.1,188.1 702.2,208.0" fill="none" stroke="#ffff00" stroke-width="2" stroke-linejoin="round" shape-rendering="crispEdges"/><rect x="29.2" y="214.5" width="8" height="8" fill="#ffff00"/><rect x="66.3" y="189.7" width="8" height="8" fill="#ffff00"/><rect x="103.5" y="180.0" width="8" height="8" fill="#ffff00"/><rect x="140.7" y="184.9" width="8" height="8" fill="#ffff00"/><rect x="177.8" y="177.2" width="8" height="8" fill="#ffff00"/><rect x="215.0" y="173.1" width="8" height="8" fill="#ffff00"/><rect x="252.2" y="177.2" width="8" height="8" fill="#ffff00"/><rect x="289.4" y="177.6" width="8" height="8" fill="#ffff00"/><rect x="326.5" y="178.8" width="8" height="8" fill="#ffff00"/><rect x="363.7" y="175.1" width="8" height="8" fill="#ffff00"/><rect x="400.9" y="171.9" width="8" height="8" fill="#ffff00"/><rect x="438.0" y="177.2" width="8" height="8" fill="#ffff00"/><rect x="475.2" y="178.8" width="8" height="8" fill="#ffff00"/><rect x="512.4" y="178.4" width="8" height="8" fill="#ffff00"/><rect x="549.6" y="178.8" width="8" height="8" fill="#ffff00"/><rect x="586.7" y="175.9" width="8" height="8" fill="#ffff00"/><rect x="623.9" y="171.9" width="8" height="8" fill="#ffff00"/><rect x="661.1" y="184.1" width="8" height="8" fill="#ffff00"/><rect x="698.2" y="204.0" width="8" height="8" fill="#ffff00"/></svg>
<div class="a" style="left:5px;top:1016px;width:1892px;height:1.5px;background:#fcfcfc"></div><div class="a" style="left:2px;top:1017.5px;width:1898px;height:1px;background:#7a7a7a"></div>
<div class="a" style="left:2px;top:1021.5px;width:1916px;height:19.5px;background:#f0f0f0"></div>
<div class="a" style="left:19px;top:1030px;width:1826px;height:2px;background:#8a8a8a;border-radius:1px"></div>
<div class="a" style="left:0;top:1041px;width:1920px;height:1px;background:#000"></div>
<div class="a" style="left:0;top:1042px;width:1920px;height:20px;background:#f0f0f0"></div>
<div class="btn" style="left:1px;top:1043px;width:18px;height:17px;background:#f0f0f0;border-color:#fff #696969 #696969 #fff"></div>
<div class="btn" style="left:18px;top:1043px;width:18px;height:17px;background:#f0f0f0;border-color:#fff #696969 #696969 #fff"></div>
<div class="btn" style="left:35px;top:1043px;width:18px;height:17px;background:#f0f0f0;border-color:#fff #696969 #696969 #fff"></div>
<div class="a" style="left:53px;top:1043px;width:1px;height:18px;background:#000"></div><div class="a" style="left:0;top:1060px;width:54px;height:1px;background:#000"></div>
<svg class="a" style="left:5px;top:1046px" width="46" height="11" viewBox="0 0 46 11"><path d="M1 1l8 9M9 1L1 10" stroke="#000" stroke-width="1.200"/><path d="M24 2v7l-4-3.500z" fill="#000"/><path d="M36 2v7l4-3.500z" fill="#000"/></svg>
<svg class="a" style="left:54px;top:1042px" width="270" height="20" viewBox="0 0 270 20"><path d="M0 0H74L66 18.500H9z" fill="#fff"/><path d="M1 .8L9 18.500H66" fill="none" stroke="#000" stroke-width="1"/><path d="M74 .8L66 18.500H123M116.500 .8L124.500 18.500H191M184.200 .8L192.200 18.500H259.500L267.500 .8" fill="none" stroke="#000" stroke-width="1"/><path d="M68.200 12.300L71 18.500M117.400 18.500L121 10.500M185.400 18.500L189 10.500" fill="none" stroke="#000" stroke-width="1"/><text x="37.500" y="12.800" font-family="Liberation Sans" font-size="10.600" font-weight="bold" text-anchor="middle" letter-spacing=".1">Measures</text><text x="94.300" y="12.800" font-family="Liberation Sans" font-size="10" text-anchor="middle" letter-spacing="-.3">Gamma</text><text x="154.500" y="12.800" font-family="Liberation Sans" font-size="10" text-anchor="middle" letter-spacing="-.3">Luminance</text><text x="226" y="12.800" font-family="Liberation Sans" font-size="10" text-anchor="middle" letter-spacing="-.3">RGB Levels</text></svg>
<svg class="a" style="left:1751px;top:1044px" width="14" height="14" viewBox="0 0 14 14"><path d="M0 0h14v8l-2 6h-3l-1-3-2 3H3L0 8z" fill="#1a1a00"/><path d="M1 1h12v7l-1.500 4.500h-2l-1-3-2.500 3.500h-2L1 8z" fill="#8a8a00"/><rect x="2" y="2" width="8" height="6" fill="#e02020"/><path d="M3 4h5v3" stroke="#fff" fill="none"/><rect x="8.500" y="9" width="4" height="4" fill="#f0f000"/></svg>
<div class="cb" style="left:1846px;top:1044px"></div>
<div class="t" style="left:1864px;top:1045px;font-size:12px;letter-spacing:-.25px">Reference</div>
<div class="a" style="left:0;top:1061px;width:1920px;height:19px;background:#e9eef7"></div>
<div class="t ui" style="left:2.500px;top:1065.500px;letter-spacing:-.5px">Ready</div>
<div class="a" style="left:1742px;top:1062px;width:75px;height:18px;border:1px solid;border-color:#a9bcd6 #fff #fff #a9bcd6"></div>
<div class="a" style="left:1820px;top:1062px;width:28px;height:18px;border:1px solid;border-color:#a9bcd6 #fff #fff #a9bcd6"></div>
<div class="a" style="left:1851px;top:1062px;width:33px;height:18px;border:1px solid;border-color:#a9bcd6 #fff #fff #a9bcd6"></div>
<div class="a" style="left:1887px;top:1062px;width:32px;height:18px;border:1px solid;border-color:#a9bcd6 #fff #fff #a9bcd6"></div>
<div class="t ui" style="left:1854px;top:1065.500px">NUM</div>
</body></html>
